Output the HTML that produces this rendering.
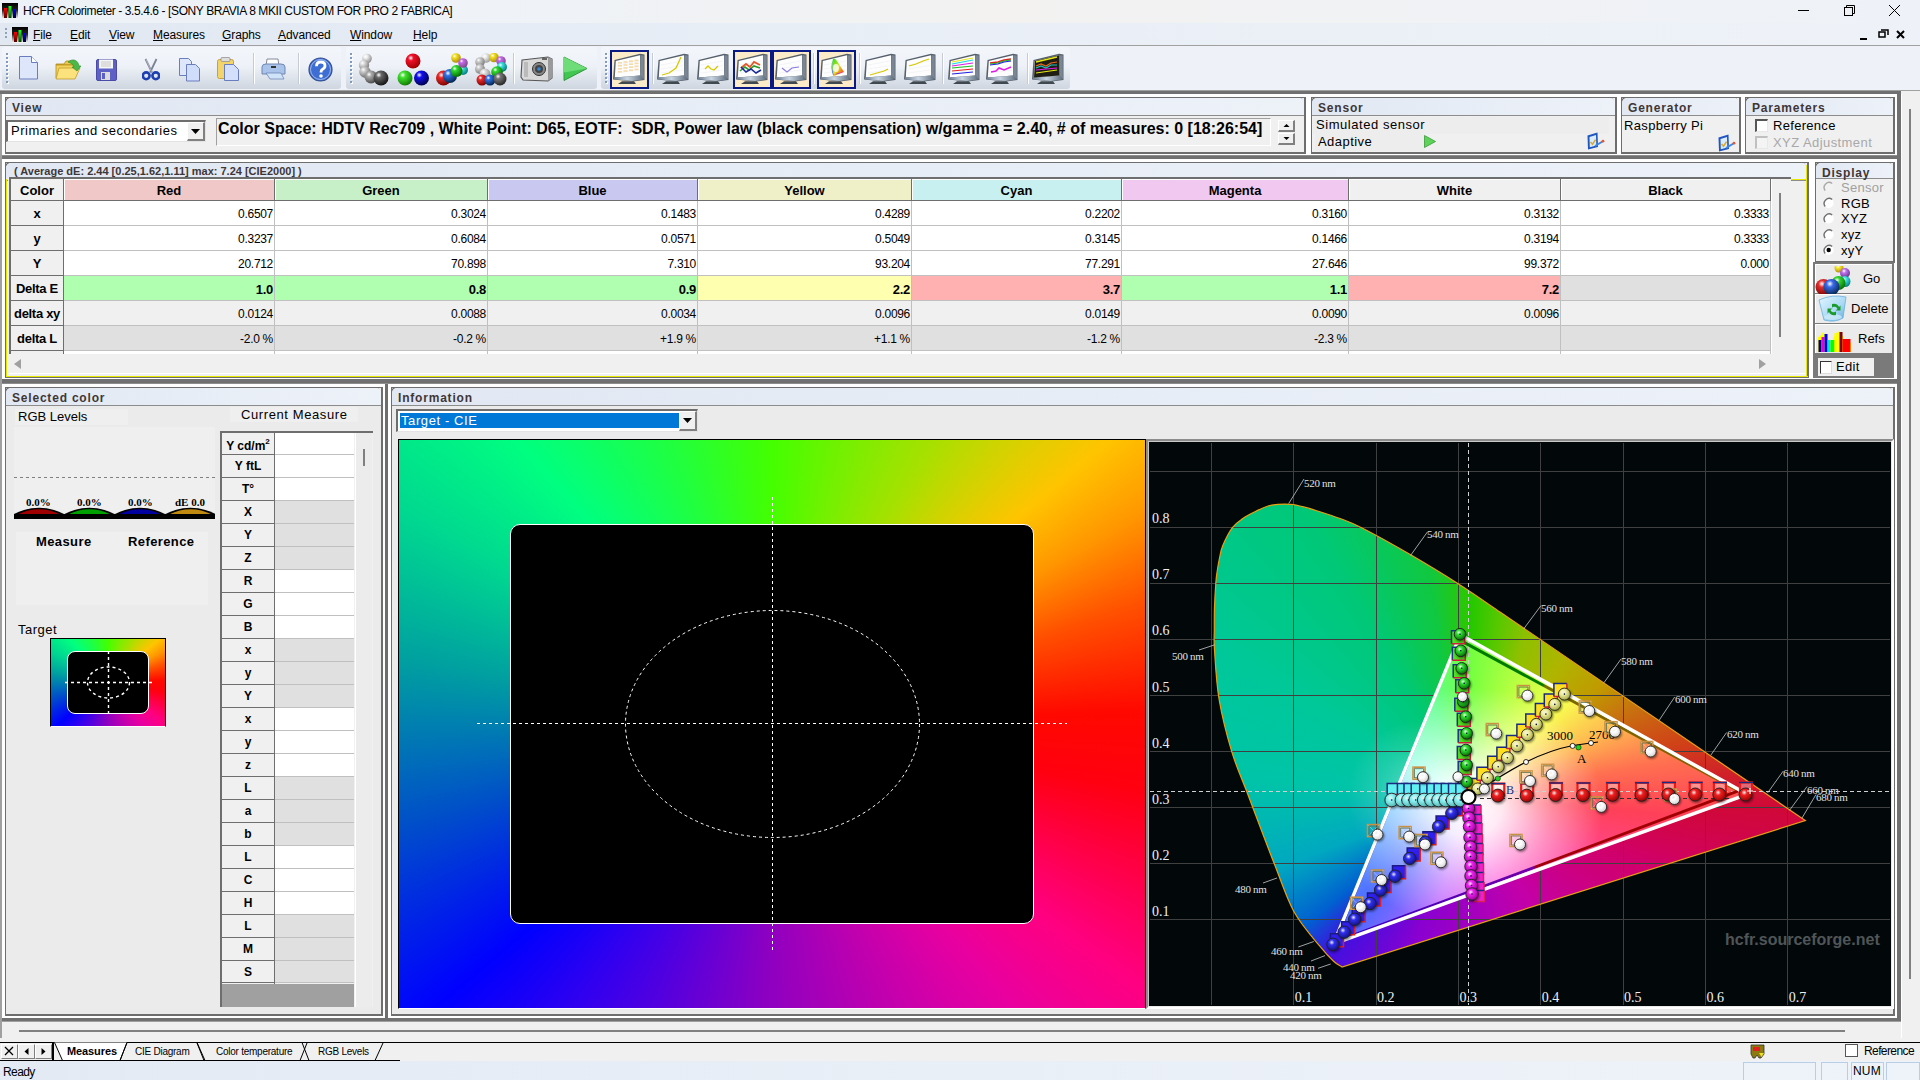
<!DOCTYPE html><html><head><meta charset="utf-8"><style>
*{margin:0;padding:0;box-sizing:border-box}
html,body{width:1920px;height:1080px;overflow:hidden}
body{position:relative;background:#f0f0f0;font-family:"Liberation Sans",sans-serif;font-size:12px;color:#000}
.a{position:absolute}
.t{position:absolute;white-space:nowrap;line-height:1}
.pane{position:absolute;background:#fff;}
.pin{position:absolute;left:3px;top:3px;right:2px;bottom:2px;border:1px solid #6e6e6e;background:#f0f0f0}
.hdr{position:absolute;left:0;top:0;right:0;height:18px;background:linear-gradient(90deg,#e1e8f3,#ecf1f9);border-bottom:1px solid #8c8c8c;border-radius:5px 5px 0 0;font-weight:bold;font-size:12px;color:#3d3a3a;padding:4px 0 0 6px;line-height:1}
</style></head><body><div class="a" style="left:0px;top:0px;width:1920px;height:23px;background:linear-gradient(90deg,#edf2f8 0%,#eff2f6 30%,#f3f2f1 52%,#f1f2f4 70%,#eef2f8 100%)"></div><svg class="a" style="left:2px;top:3px" width="16" height="16" viewBox="0 0 16 16"><defs><linearGradient id="ig" x1="0" y1="0" x2="0" y2="1"><stop offset="0" stop-color="#000"/><stop offset="0.45" stop-color="#222"/><stop offset="1" stop-color="#fff"/></linearGradient><linearGradient id="ir" x1="0" y1="0" x2="0" y2="1"><stop offset="0" stop-color="#f00"/><stop offset="1" stop-color="#500"/></linearGradient><linearGradient id="igr" x1="0" y1="0" x2="0" y2="1"><stop offset="0" stop-color="#2f2"/><stop offset="1" stop-color="#040"/></linearGradient><linearGradient id="ib" x1="0" y1="0" x2="0" y2="1"><stop offset="0" stop-color="#00f"/><stop offset="1" stop-color="#003"/></linearGradient></defs><rect x="0" y="0" width="16" height="16" fill="url(#ig)"/><rect x="2" y="5" width="3" height="10" fill="url(#ir)"/><rect x="6.5" y="3" width="3" height="12" fill="url(#igr)"/><rect x="11" y="6" width="3" height="9" fill="url(#ib)"/></svg><div class="t" style="left:23px;top:5px;font-size:12px;color:#000;letter-spacing:-0.4px">HCFR Colorimeter - 3.5.4.6 - [SONY BRAVIA 8 MKII CUSTOM FOR PRO 2 FABRICA]</div><svg class="a" style="left:1790px;top:0" width="130" height="23"><line x1="1798" y1="10.5" x2="1809" y2="10.5" stroke="#000" transform="translate(-1790,0)"/><g transform="translate(-1790,0)" fill="none" stroke="#000"><rect x="1844.5" y="7.5" width="8" height="8"/><path d="M1846.5 7.5V5.5h8v8h-2"/><path d="M1889 5l11 11M1900 5l-11 11"/></g></svg><div class="a" style="left:0px;top:23px;width:1920px;height:22px;background:linear-gradient(90deg,#e1e8f2,#e8eef6 40%,#eef2f8)"></div><div class="a" style="left:0px;top:45px;width:1920px;height:1px;background:#a0a0a0"></div><div class="a" style="left:0px;top:46px;width:1920px;height:44px;background:#eef2f8"></div><div class="a" style="left:5px;top:28px;width:2px;height:2px;background:#8da3bd"></div><div class="a" style="left:5px;top:32px;width:2px;height:2px;background:#8da3bd"></div><div class="a" style="left:5px;top:36px;width:2px;height:2px;background:#8da3bd"></div><svg class="a" style="left:12px;top:27px" width="16" height="16" viewBox="0 0 16 16"><defs><linearGradient id="ig" x1="0" y1="0" x2="0" y2="1"><stop offset="0" stop-color="#000"/><stop offset="0.45" stop-color="#222"/><stop offset="1" stop-color="#fff"/></linearGradient><linearGradient id="ir" x1="0" y1="0" x2="0" y2="1"><stop offset="0" stop-color="#f00"/><stop offset="1" stop-color="#500"/></linearGradient><linearGradient id="igr" x1="0" y1="0" x2="0" y2="1"><stop offset="0" stop-color="#2f2"/><stop offset="1" stop-color="#040"/></linearGradient><linearGradient id="ib" x1="0" y1="0" x2="0" y2="1"><stop offset="0" stop-color="#00f"/><stop offset="1" stop-color="#003"/></linearGradient></defs><rect x="0" y="0" width="16" height="16" fill="url(#ig)"/><rect x="2" y="5" width="3" height="10" fill="url(#ir)"/><rect x="6.5" y="3" width="3" height="12" fill="url(#igr)"/><rect x="11" y="6" width="3" height="9" fill="url(#ib)"/></svg><div class="t" style="left:33px;top:29px;font-size:12px;letter-spacing:-0.1px"><u>F</u>ile</div><div class="t" style="left:70px;top:29px;font-size:12px;letter-spacing:-0.1px"><u>E</u>dit</div><div class="t" style="left:109px;top:29px;font-size:12px;letter-spacing:-0.1px"><u>V</u>iew</div><div class="t" style="left:153px;top:29px;font-size:12px;letter-spacing:-0.1px"><u>M</u>easures</div><div class="t" style="left:222px;top:29px;font-size:12px;letter-spacing:-0.1px"><u>G</u>raphs</div><div class="t" style="left:278px;top:29px;font-size:12px;letter-spacing:-0.1px"><u>A</u>dvanced</div><div class="t" style="left:350px;top:29px;font-size:12px;letter-spacing:-0.1px"><u>W</u>indow</div><div class="t" style="left:413px;top:29px;font-size:12px;letter-spacing:-0.1px"><u>H</u>elp</div><svg class="a" style="left:1850px;top:25px" width="70" height="20"><g fill="none" stroke="#000" stroke-width="2"><path d="M10 14h7"/><rect x="29" y="7" width="6" height="5" stroke-width="1.5"/><path d="M31 5h7v5" stroke-width="1.5"/><path d="M47 6l7 7M54 6l-7 7"/></g></svg><div class="a" style="left:2px;top:47px;width:339px;height:42px;background:linear-gradient(#f3f6fb,#eef2f8 45%,#cfd6e0);border-radius:3px"></div><div class="a" style="left:346px;top:47px;width:251px;height:42px;background:linear-gradient(#f3f6fb,#eef2f8 45%,#cfd6e0);border-radius:3px"></div><div class="a" style="left:601px;top:47px;width:469px;height:42px;background:linear-gradient(#f3f6fb,#eef2f8 45%,#cfd6e0);border-radius:3px"></div><div class="a" style="left:6px;top:53px;width:2px;height:2px;background:#7f9bbd;box-shadow:1px 1px 0 #fff"></div><div class="a" style="left:6px;top:57px;width:2px;height:2px;background:#7f9bbd;box-shadow:1px 1px 0 #fff"></div><div class="a" style="left:6px;top:61px;width:2px;height:2px;background:#7f9bbd;box-shadow:1px 1px 0 #fff"></div><div class="a" style="left:6px;top:65px;width:2px;height:2px;background:#7f9bbd;box-shadow:1px 1px 0 #fff"></div><div class="a" style="left:6px;top:69px;width:2px;height:2px;background:#7f9bbd;box-shadow:1px 1px 0 #fff"></div><div class="a" style="left:6px;top:73px;width:2px;height:2px;background:#7f9bbd;box-shadow:1px 1px 0 #fff"></div><div class="a" style="left:6px;top:77px;width:2px;height:2px;background:#7f9bbd;box-shadow:1px 1px 0 #fff"></div><div class="a" style="left:6px;top:81px;width:2px;height:2px;background:#7f9bbd;box-shadow:1px 1px 0 #fff"></div><div class="a" style="left:350px;top:53px;width:2px;height:2px;background:#7f9bbd;box-shadow:1px 1px 0 #fff"></div><div class="a" style="left:350px;top:57px;width:2px;height:2px;background:#7f9bbd;box-shadow:1px 1px 0 #fff"></div><div class="a" style="left:350px;top:61px;width:2px;height:2px;background:#7f9bbd;box-shadow:1px 1px 0 #fff"></div><div class="a" style="left:350px;top:65px;width:2px;height:2px;background:#7f9bbd;box-shadow:1px 1px 0 #fff"></div><div class="a" style="left:350px;top:69px;width:2px;height:2px;background:#7f9bbd;box-shadow:1px 1px 0 #fff"></div><div class="a" style="left:350px;top:73px;width:2px;height:2px;background:#7f9bbd;box-shadow:1px 1px 0 #fff"></div><div class="a" style="left:350px;top:77px;width:2px;height:2px;background:#7f9bbd;box-shadow:1px 1px 0 #fff"></div><div class="a" style="left:350px;top:81px;width:2px;height:2px;background:#7f9bbd;box-shadow:1px 1px 0 #fff"></div><div class="a" style="left:605px;top:53px;width:2px;height:2px;background:#7f9bbd;box-shadow:1px 1px 0 #fff"></div><div class="a" style="left:605px;top:57px;width:2px;height:2px;background:#7f9bbd;box-shadow:1px 1px 0 #fff"></div><div class="a" style="left:605px;top:61px;width:2px;height:2px;background:#7f9bbd;box-shadow:1px 1px 0 #fff"></div><div class="a" style="left:605px;top:65px;width:2px;height:2px;background:#7f9bbd;box-shadow:1px 1px 0 #fff"></div><div class="a" style="left:605px;top:69px;width:2px;height:2px;background:#7f9bbd;box-shadow:1px 1px 0 #fff"></div><div class="a" style="left:605px;top:73px;width:2px;height:2px;background:#7f9bbd;box-shadow:1px 1px 0 #fff"></div><div class="a" style="left:605px;top:77px;width:2px;height:2px;background:#7f9bbd;box-shadow:1px 1px 0 #fff"></div><div class="a" style="left:605px;top:81px;width:2px;height:2px;background:#7f9bbd;box-shadow:1px 1px 0 #fff"></div><svg class="a" style="left:19px;top:56px" width="20" height="24" viewBox="0 0 20 24"><path d="M0.5 0.5h12l6 6v16.5h-18z" fill="#dde6fb" stroke="#6a7dbf"/><path d="M12.5 0.5v6h6" fill="#fff" stroke="#6a7dbf"/></svg><svg class="a" style="left:55px;top:58px" width="26" height="22" viewBox="0 0 26 22"><path d="M1 6h8l2-3h8v4h-18z" fill="#e9c74a" stroke="#b38a1a" stroke-width="0.8"/><path d="M1 7h18v13h-18z" fill="#f3d35c" stroke="#b38a1a" stroke-width="0.8"/><path d="M4 10h21l-5 11h-19z" fill="#fbe27c" stroke="#c39a2a" stroke-width="0.8"/><path d="M13 4c5-4 10-2 11 4l2 0-4 5-5-4 2 0c-1-3-3-4-6-5z" fill="#4cb84a" stroke="#2a8a28" stroke-width="0.6"/></svg><svg class="a" style="left:96px;top:59px" width="21" height="22" viewBox="0 0 21 22"><rect x="0.5" y="0.5" width="20" height="21" rx="1.5" fill="#5f60c6" stroke="#4a4aa8"/><rect x="3" y="0.5" width="14" height="9" fill="#f6f6f6"/><path d="M5 3h10M5 5h10M5 7h10" stroke="#aaa" stroke-width="0.6"/><rect x="5" y="13" width="9" height="8" fill="#dcdcdc"/><rect x="6" y="14" width="3" height="6" fill="#5f60c6"/></svg><svg class="a" style="left:142px;top:58px" width="18" height="23" viewBox="0 0 18 23"><path d="M3.5 1l6.5 13.5M14.5 1l-6.5 13.5" stroke="#7a8296" stroke-width="1.8"/><path d="M4 1.5l5.5 12" stroke="#d0d4dc" stroke-width="0.6"/><circle cx="4.2" cy="17.8" r="3.4" fill="none" stroke="#1d3fb0" stroke-width="2.6"/><circle cx="13.8" cy="17.8" r="3.4" fill="none" stroke="#1d3fb0" stroke-width="2.6"/></svg><svg class="a" style="left:179px;top:58px" width="22" height="24" viewBox="0 0 22 24"><path d="M0.5 0.5h9l3 3v14h-12z" fill="#dde6fb" stroke="#6a7dbf"/><path d="M7.5 6.5h9l4 4v12.5h-13z" fill="#cfdcfa" stroke="#6a7dbf"/></svg><svg class="a" style="left:217px;top:57px" width="23" height="25" viewBox="0 0 23 25"><rect x="0.5" y="2.5" width="16" height="19" rx="2" fill="#f2d46a" stroke="#c6a23a"/><rect x="4" y="0.5" width="9" height="4" rx="1" fill="#ddd" stroke="#888" stroke-width="0.7"/><path d="M7.5 7.5h9l5 5v11h-14z" fill="#d4e0fb" stroke="#6a7dbf"/></svg><div class="a" style="left:253px;top:53px;width:1px;height:31px;background:#c5cbd5;box-shadow:1px 0 0 #fff"></div><svg class="a" style="left:261px;top:58px" width="25" height="23" viewBox="0 0 25 23"><path d="M6 1h11l1 7h-13z" fill="#fff" stroke="#889"/><path d="M1 9q0-3 4-3h15q4 0 4 3v7h-23z" fill="#a9c3ea" stroke="#6f87b4"/><rect x="10" y="8" width="5" height="2" fill="#333"/><path d="M5 15h15l3 6h-14z" fill="#cfe4f8" stroke="#6f87b4" stroke-width="0.8"/></svg><div class="a" style="left:298px;top:53px;width:1px;height:31px;background:#c5cbd5;box-shadow:1px 0 0 #fff"></div><svg class="a" style="left:308px;top:57px" width="25" height="25" viewBox="0 0 25 25"><circle cx="12.5" cy="12.5" r="11.5" fill="#3e6dd3" stroke="#34508f" stroke-width="1.2"/><circle cx="12.5" cy="12.5" r="10" fill="none" stroke="#b8cdf4" stroke-width="0.8"/><path d="M8.5 9.2q0-4.2 4.2-4.2 4.3 0 4.3 3.8 0 2.3-2.4 3.5-1.5.8-1.5 2.5v.8" fill="none" stroke="#fff" stroke-width="2.8"/><circle cx="13" cy="19" r="1.8" fill="#fff"/></svg><svg class="a" style="left:357px;top:53px" width="33" height="33" viewBox="0 0 33 33"><radialGradient id="g1" cx="0.35" cy="0.3" r="0.75"><stop offset="0" stop-color="#fff"/><stop offset="0.25" stop-color="#eee"/><stop offset="1" stop-color="#888"/></radialGradient><circle cx="10" cy="5.5" r="4.8" fill="url(#g1)"/><radialGradient id="g2" cx="0.35" cy="0.3" r="0.75"><stop offset="0" stop-color="#fff"/><stop offset="0.25" stop-color="#ddd"/><stop offset="1" stop-color="#777"/></radialGradient><circle cx="7" cy="12" r="5.2" fill="url(#g2)"/><radialGradient id="g3" cx="0.35" cy="0.3" r="0.75"><stop offset="0" stop-color="#fff"/><stop offset="0.25" stop-color="#ccc"/><stop offset="1" stop-color="#666"/></radialGradient><circle cx="8" cy="19" r="5.8" fill="url(#g3)"/><radialGradient id="g4" cx="0.35" cy="0.3" r="0.75"><stop offset="0" stop-color="#fff"/><stop offset="0.25" stop-color="#aaa"/><stop offset="1" stop-color="#444"/></radialGradient><circle cx="14" cy="24" r="6.5" fill="url(#g4)"/><radialGradient id="g5" cx="0.35" cy="0.3" r="0.75"><stop offset="0" stop-color="#fff"/><stop offset="0.25" stop-color="#666"/><stop offset="1" stop-color="#111"/></radialGradient><circle cx="24" cy="25" r="7.5" fill="url(#g5)"/></svg><svg class="a" style="left:397px;top:53px" width="33" height="33" viewBox="0 0 33 33"><radialGradient id="g6" cx="0.35" cy="0.3" r="0.75"><stop offset="0" stop-color="#fff"/><stop offset="0.25" stop-color="#f0102a"/><stop offset="1" stop-color="#900"/></radialGradient><circle cx="16" cy="8" r="7.5" fill="url(#g6)"/><radialGradient id="g7" cx="0.35" cy="0.3" r="0.75"><stop offset="0" stop-color="#fff"/><stop offset="0.25" stop-color="#40e030"/><stop offset="1" stop-color="#170"/></radialGradient><circle cx="8" cy="25" r="7.5" fill="url(#g7)"/><radialGradient id="g8" cx="0.35" cy="0.3" r="0.75"><stop offset="0" stop-color="#fff"/><stop offset="0.25" stop-color="#1010f0"/><stop offset="1" stop-color="#004"/></radialGradient><circle cx="24.5" cy="25" r="7.5" fill="url(#g8)"/></svg><svg class="a" style="left:436px;top:53px" width="33" height="33" viewBox="0 0 33 33"><radialGradient id="g9" cx="0.35" cy="0.3" r="0.75"><stop offset="0" stop-color="#fff"/><stop offset="0.25" stop-color="#e82a2a"/><stop offset="1" stop-color="#700"/></radialGradient><circle cx="7.5" cy="25" r="7.5" fill="url(#g9)"/><radialGradient id="g10" cx="0.35" cy="0.3" r="0.75"><stop offset="0" stop-color="#fff"/><stop offset="0.25" stop-color="#3070e8"/><stop offset="1" stop-color="#024"/></radialGradient><circle cx="14" cy="23" r="7" fill="url(#g10)"/><radialGradient id="g11" cx="0.35" cy="0.3" r="0.75"><stop offset="0" stop-color="#fff"/><stop offset="0.25" stop-color="#40e0e0"/><stop offset="1" stop-color="#077"/></radialGradient><circle cx="27" cy="17" r="5" fill="url(#g11)"/><radialGradient id="g12" cx="0.35" cy="0.3" r="0.75"><stop offset="0" stop-color="#fff"/><stop offset="0.25" stop-color="#30d830"/><stop offset="1" stop-color="#060"/></radialGradient><circle cx="20.5" cy="18" r="6" fill="url(#g12)"/><radialGradient id="g13" cx="0.35" cy="0.3" r="0.75"><stop offset="0" stop-color="#fff"/><stop offset="0.25" stop-color="#f3e12a"/><stop offset="1" stop-color="#a80"/></radialGradient><circle cx="20" cy="5" r="4.8" fill="url(#g13)"/><radialGradient id="g14" cx="0.35" cy="0.3" r="0.75"><stop offset="0" stop-color="#fff"/><stop offset="0.25" stop-color="#c46ae6"/><stop offset="1" stop-color="#748"/></radialGradient><circle cx="27" cy="10" r="4.8" fill="url(#g14)"/></svg><svg class="a" style="left:475px;top:53px" width="33" height="33" viewBox="0 0 33 33"><radialGradient id="g15" cx="0.35" cy="0.3" r="0.75"><stop offset="0" stop-color="#fff"/><stop offset="0.25" stop-color="#eee"/><stop offset="1" stop-color="#999"/></radialGradient><circle cx="11" cy="5" r="4.8" fill="url(#g15)"/><radialGradient id="g16" cx="0.35" cy="0.3" r="0.75"><stop offset="0" stop-color="#fff"/><stop offset="0.25" stop-color="#f3e12a"/><stop offset="1" stop-color="#a80"/></radialGradient><circle cx="19" cy="4.5" r="4.8" fill="url(#g16)"/><radialGradient id="g17" cx="0.35" cy="0.3" r="0.75"><stop offset="0" stop-color="#fff"/><stop offset="0.25" stop-color="#c46ae6"/><stop offset="1" stop-color="#748"/></radialGradient><circle cx="26" cy="8" r="4.8" fill="url(#g17)"/><radialGradient id="g18" cx="0.35" cy="0.3" r="0.75"><stop offset="0" stop-color="#fff"/><stop offset="0.25" stop-color="#40e0e0"/><stop offset="1" stop-color="#077"/></radialGradient><circle cx="27" cy="14" r="5" fill="url(#g18)"/><radialGradient id="g19" cx="0.35" cy="0.3" r="0.75"><stop offset="0" stop-color="#fff"/><stop offset="0.25" stop-color="#ccc"/><stop offset="1" stop-color="#777"/></radialGradient><circle cx="5" cy="9" r="4.8" fill="url(#g19)"/><radialGradient id="g20" cx="0.35" cy="0.3" r="0.75"><stop offset="0" stop-color="#fff"/><stop offset="0.25" stop-color="#ccc"/><stop offset="1" stop-color="#777"/></radialGradient><circle cx="5" cy="16" r="5" fill="url(#g20)"/><radialGradient id="g21" cx="0.35" cy="0.3" r="0.75"><stop offset="0" stop-color="#fff"/><stop offset="0.25" stop-color="#ddd"/><stop offset="1" stop-color="#888"/></radialGradient><circle cx="10" cy="21" r="5.5" fill="url(#g21)"/><radialGradient id="g22" cx="0.35" cy="0.3" r="0.75"><stop offset="0" stop-color="#fff"/><stop offset="0.25" stop-color="#30d830"/><stop offset="1" stop-color="#060"/></radialGradient><circle cx="22" cy="19" r="5.8" fill="url(#g22)"/><radialGradient id="g23" cx="0.35" cy="0.3" r="0.75"><stop offset="0" stop-color="#fff"/><stop offset="0.25" stop-color="#e82a2a"/><stop offset="1" stop-color="#700"/></radialGradient><circle cx="7" cy="27" r="5.5" fill="url(#g23)"/><radialGradient id="g24" cx="0.35" cy="0.3" r="0.75"><stop offset="0" stop-color="#fff"/><stop offset="0.25" stop-color="#3070e8"/><stop offset="1" stop-color="#024"/></radialGradient><circle cx="15" cy="27" r="5.5" fill="url(#g24)"/><radialGradient id="g25" cx="0.35" cy="0.3" r="0.75"><stop offset="0" stop-color="#fff"/><stop offset="0.25" stop-color="#777"/><stop offset="1" stop-color="#222"/></radialGradient><circle cx="25" cy="26" r="6.5" fill="url(#g25)"/></svg><div class="a" style="left:513px;top:53px;width:1px;height:31px;background:#c5cbd5;box-shadow:1px 0 0 #fff"></div><svg class="a" style="left:520px;top:54px" width="33" height="30" viewBox="0 0 33 30"><path d="M2 6l26-3 4 2v19l-4 3-25-1-2-3z" fill="#d9d9d9" stroke="#555" stroke-width="1.1"/><path d="M28 3l4 2v19l-4 3z" fill="#9a9a9a"/><rect x="4" y="8" width="4" height="15" fill="#bbb"/><circle cx="19" cy="15" r="6.5" fill="#888" stroke="#333"/><circle cx="19" cy="15" r="4" fill="#444"/><circle cx="19" cy="15" r="1.8" fill="#2a8ae0"/><rect x="22" y="4" width="5" height="2" fill="#666"/></svg><svg class="a" style="left:562px;top:55px" width="27" height="27" viewBox="0 0 27 27"><path d="M2 2l23 11.5-23 12z" fill="#41c650" stroke="#2c9a3a" stroke-width="1"/><path d="M2 2l23 11.5-23 4z" fill="#6edc78"/></svg><div class="a" style="left:610px;top:50px;width:39px;height:39px;background:#fcebc9;border:2px solid #0a1a84"></div><svg class="a" style="left:613px;top:53px" width="32" height="32" viewBox="0 0 32 32"><defs><linearGradient id="g26" x1="0" y1="0" x2="1" y2="0"><stop offset="0" stop-color="#6f8094"/><stop offset="0.45" stop-color="#c9d5e2"/><stop offset="1" stop-color="#5d6b7b"/></linearGradient></defs><path d="M1.5 7 L27 0.8 L31.5 1.6 L31.5 27 L20 28.5 L0 26.5 Z" fill="#56606c"/><path d="M2.8 8 L27 2.2 L27.2 22.5 L1.8 24.5 Z" fill="#fdfdfd"/><path d="M4 12L26 8M4 16L26 12.5M4 20L26 17" stroke="#eceff3" stroke-width="0.6"/><path d="M1 24.6 L27.2 22.5 L30.8 26.6 L19 28 L1 26.2Z" fill="url(#g26)"/><path d="M27.3 2.2 L30.8 2.6 L30.8 26.2 L27.3 22.4 Z" fill="#7a8694"/><path d="M5 31 L23 31 L21 28.2 L9 28.2 Z" fill="#404850"/><g fill="#f7d9a8"><rect x="5.0" y="9.0" width="4" height="1.6"/><rect x="5.0" y="12.0" width="4" height="1.6"/><rect x="5.0" y="15.0" width="4" height="1.6"/><rect x="5.0" y="18.0" width="4" height="1.6"/><rect x="10.5" y="8.2" width="4" height="1.6"/><rect x="10.5" y="11.2" width="4" height="1.6"/><rect x="10.5" y="14.2" width="4" height="1.6"/><rect x="10.5" y="17.2" width="4" height="1.6"/><rect x="16.0" y="7.4" width="4" height="1.6"/><rect x="16.0" y="10.4" width="4" height="1.6"/><rect x="16.0" y="13.4" width="4" height="1.6"/><rect x="16.0" y="16.4" width="4" height="1.6"/><rect x="21.5" y="6.6" width="4" height="1.6"/><rect x="21.5" y="9.6" width="4" height="1.6"/><rect x="21.5" y="12.6" width="4" height="1.6"/><rect x="21.5" y="15.6" width="4" height="1.6"/></g></svg><svg class="a" style="left:657px;top:53px" width="32" height="32" viewBox="0 0 32 32"><defs><linearGradient id="g27" x1="0" y1="0" x2="1" y2="0"><stop offset="0" stop-color="#6f8094"/><stop offset="0.45" stop-color="#c9d5e2"/><stop offset="1" stop-color="#5d6b7b"/></linearGradient></defs><path d="M1.5 7 L27 0.8 L31.5 1.6 L31.5 27 L20 28.5 L0 26.5 Z" fill="#56606c"/><path d="M2.8 8 L27 2.2 L27.2 22.5 L1.8 24.5 Z" fill="#fdfdfd"/><path d="M4 12L26 8M4 16L26 12.5M4 20L26 17" stroke="#eceff3" stroke-width="0.6"/><path d="M1 24.6 L27.2 22.5 L30.8 26.6 L19 28 L1 26.2Z" fill="url(#g27)"/><path d="M27.3 2.2 L30.8 2.6 L30.8 26.2 L27.3 22.4 Z" fill="#7a8694"/><path d="M5 31 L23 31 L21 28.2 L9 28.2 Z" fill="#404850"/><polyline points="5,22 12,20 19,15 24,4" fill="none" stroke="#d8c800" stroke-width="1.3"/></svg><svg class="a" style="left:697px;top:53px" width="32" height="32" viewBox="0 0 32 32"><defs><linearGradient id="g28" x1="0" y1="0" x2="1" y2="0"><stop offset="0" stop-color="#6f8094"/><stop offset="0.45" stop-color="#c9d5e2"/><stop offset="1" stop-color="#5d6b7b"/></linearGradient></defs><path d="M1.5 7 L27 0.8 L31.5 1.6 L31.5 27 L20 28.5 L0 26.5 Z" fill="#56606c"/><path d="M2.8 8 L27 2.2 L27.2 22.5 L1.8 24.5 Z" fill="#fdfdfd"/><path d="M4 12L26 8M4 16L26 12.5M4 20L26 17" stroke="#eceff3" stroke-width="0.6"/><path d="M1 24.6 L27.2 22.5 L30.8 26.6 L19 28 L1 26.2Z" fill="url(#g28)"/><path d="M27.3 2.2 L30.8 2.6 L30.8 26.2 L27.3 22.4 Z" fill="#7a8694"/><path d="M5 31 L23 31 L21 28.2 L9 28.2 Z" fill="#404850"/><polyline points="8,16 11,13 14,16 17,17 21,13" fill="none" stroke="#d8c800" stroke-width="1.3"/></svg><div class="a" style="left:733px;top:50px;width:39px;height:39px;background:#fcebc9;border:2px solid #0a1a84"></div><svg class="a" style="left:736px;top:53px" width="32" height="32" viewBox="0 0 32 32"><defs><linearGradient id="g29" x1="0" y1="0" x2="1" y2="0"><stop offset="0" stop-color="#6f8094"/><stop offset="0.45" stop-color="#c9d5e2"/><stop offset="1" stop-color="#5d6b7b"/></linearGradient></defs><path d="M1.5 7 L27 0.8 L31.5 1.6 L31.5 27 L20 28.5 L0 26.5 Z" fill="#56606c"/><path d="M2.8 8 L27 2.2 L27.2 22.5 L1.8 24.5 Z" fill="#fdfdfd"/><path d="M4 12L26 8M4 16L26 12.5M4 20L26 17" stroke="#eceff3" stroke-width="0.6"/><path d="M1 24.6 L27.2 22.5 L30.8 26.6 L19 28 L1 26.2Z" fill="url(#g29)"/><path d="M27.3 2.2 L30.8 2.6 L30.8 26.2 L27.3 22.4 Z" fill="#7a8694"/><path d="M5 31 L23 31 L21 28.2 L9 28.2 Z" fill="#404850"/><polyline points="5,15 10,11 14,14 18,9 24,12" fill="none" stroke="#e05a2a" stroke-width="1.8"/><polyline points="4,18 9,14 13,17 18,13 24,15" fill="none" stroke="#2a9a2a" stroke-width="1.6"/><polyline points="5,14 10,19 15,16 20,20 25,17" fill="none" stroke="#1a2a9a" stroke-width="1.6"/></svg><div class="a" style="left:772px;top:50px;width:39px;height:39px;background:#fcebc9;border:2px solid #0a1a84"></div><svg class="a" style="left:775px;top:53px" width="32" height="32" viewBox="0 0 32 32"><defs><linearGradient id="g30" x1="0" y1="0" x2="1" y2="0"><stop offset="0" stop-color="#6f8094"/><stop offset="0.45" stop-color="#c9d5e2"/><stop offset="1" stop-color="#5d6b7b"/></linearGradient></defs><path d="M1.5 7 L27 0.8 L31.5 1.6 L31.5 27 L20 28.5 L0 26.5 Z" fill="#56606c"/><path d="M2.8 8 L27 2.2 L27.2 22.5 L1.8 24.5 Z" fill="#fdfdfd"/><path d="M4 12L26 8M4 16L26 12.5M4 20L26 17" stroke="#eceff3" stroke-width="0.6"/><path d="M1 24.6 L27.2 22.5 L30.8 26.6 L19 28 L1 26.2Z" fill="url(#g30)"/><path d="M27.3 2.2 L30.8 2.6 L30.8 26.2 L27.3 22.4 Z" fill="#7a8694"/><path d="M5 31 L23 31 L21 28.2 L9 28.2 Z" fill="#404850"/><polyline points="7,15 12,19 17,15 24,14" fill="none" stroke="#8a7ae0" stroke-width="1.1"/></svg><div class="a" style="left:817px;top:50px;width:39px;height:39px;background:#fcebc9;border:2px solid #0a1a84"></div><svg class="a" style="left:820px;top:53px" width="32" height="32" viewBox="0 0 32 32"><defs><linearGradient id="g31" x1="0" y1="0" x2="1" y2="0"><stop offset="0" stop-color="#6f8094"/><stop offset="0.45" stop-color="#c9d5e2"/><stop offset="1" stop-color="#5d6b7b"/></linearGradient></defs><path d="M1.5 7 L27 0.8 L31.5 1.6 L31.5 27 L20 28.5 L0 26.5 Z" fill="#56606c"/><path d="M2.8 8 L27 2.2 L27.2 22.5 L1.8 24.5 Z" fill="#fdfdfd"/><path d="M4 12L26 8M4 16L26 12.5M4 20L26 17" stroke="#eceff3" stroke-width="0.6"/><path d="M1 24.6 L27.2 22.5 L30.8 26.6 L19 28 L1 26.2Z" fill="url(#g31)"/><path d="M27.3 2.2 L30.8 2.6 L30.8 26.2 L27.3 22.4 Z" fill="#7a8694"/><path d="M5 31 L23 31 L21 28.2 L9 28.2 Z" fill="#404850"/><defs><linearGradient id="cie3" x1="0" y1="0" x2="1" y2="1"><stop offset="0" stop-color="#20e020"/><stop offset="0.5" stop-color="#e0e020"/><stop offset="1" stop-color="#ff2020"/></linearGradient><linearGradient id="cie4" x1="0" y1="0" x2="0" y2="1"><stop offset="0" stop-color="#30d030"/><stop offset="1" stop-color="#3040ff"/></linearGradient></defs><path d="M13 6q2-1 4 2l7 11-10 4q-3-8-1-17z" fill="url(#cie3)"/><path d="M13 6q-2 9 1 17l-1-1q-3-8 0-16z" fill="url(#cie4)"/><path d="M14 22l10-3-6 1z" fill="#c020e0"/><ellipse cx="16" cy="15" rx="3" ry="4" fill="#fff" opacity="0.8"/></svg><svg class="a" style="left:864px;top:53px" width="32" height="32" viewBox="0 0 32 32"><defs><linearGradient id="g32" x1="0" y1="0" x2="1" y2="0"><stop offset="0" stop-color="#6f8094"/><stop offset="0.45" stop-color="#c9d5e2"/><stop offset="1" stop-color="#5d6b7b"/></linearGradient></defs><path d="M1.5 7 L27 0.8 L31.5 1.6 L31.5 27 L20 28.5 L0 26.5 Z" fill="#56606c"/><path d="M2.8 8 L27 2.2 L27.2 22.5 L1.8 24.5 Z" fill="#fdfdfd"/><path d="M4 12L26 8M4 16L26 12.5M4 20L26 17" stroke="#eceff3" stroke-width="0.6"/><path d="M1 24.6 L27.2 22.5 L30.8 26.6 L19 28 L1 26.2Z" fill="url(#g32)"/><path d="M27.3 2.2 L30.8 2.6 L30.8 26.2 L27.3 22.4 Z" fill="#7a8694"/><path d="M5 31 L23 31 L21 28.2 L9 28.2 Z" fill="#404850"/><polyline points="6,22 13,20 20,18 24,16" fill="none" stroke="#d8c800" stroke-width="1.3"/></svg><svg class="a" style="left:904px;top:53px" width="32" height="32" viewBox="0 0 32 32"><defs><linearGradient id="g33" x1="0" y1="0" x2="1" y2="0"><stop offset="0" stop-color="#6f8094"/><stop offset="0.45" stop-color="#c9d5e2"/><stop offset="1" stop-color="#5d6b7b"/></linearGradient></defs><path d="M1.5 7 L27 0.8 L31.5 1.6 L31.5 27 L20 28.5 L0 26.5 Z" fill="#56606c"/><path d="M2.8 8 L27 2.2 L27.2 22.5 L1.8 24.5 Z" fill="#fdfdfd"/><path d="M4 12L26 8M4 16L26 12.5M4 20L26 17" stroke="#eceff3" stroke-width="0.6"/><path d="M1 24.6 L27.2 22.5 L30.8 26.6 L19 28 L1 26.2Z" fill="url(#g33)"/><path d="M27.3 2.2 L30.8 2.6 L30.8 26.2 L27.3 22.4 Z" fill="#7a8694"/><path d="M5 31 L23 31 L21 28.2 L9 28.2 Z" fill="#404850"/><polyline points="5,13 12,11 19,8 25,6" fill="none" stroke="#d8c800" stroke-width="1.3"/></svg><svg class="a" style="left:948px;top:53px" width="32" height="32" viewBox="0 0 32 32"><defs><linearGradient id="g34" x1="0" y1="0" x2="1" y2="0"><stop offset="0" stop-color="#6f8094"/><stop offset="0.45" stop-color="#c9d5e2"/><stop offset="1" stop-color="#5d6b7b"/></linearGradient></defs><path d="M1.5 7 L27 0.8 L31.5 1.6 L31.5 27 L20 28.5 L0 26.5 Z" fill="#56606c"/><path d="M2.8 8 L27 2.2 L27.2 22.5 L1.8 24.5 Z" fill="#fdfdfd"/><path d="M4 12L26 8M4 16L26 12.5M4 20L26 17" stroke="#eceff3" stroke-width="0.6"/><path d="M1 24.6 L27.2 22.5 L30.8 26.6 L19 28 L1 26.2Z" fill="url(#g34)"/><path d="M27.3 2.2 L30.8 2.6 L30.8 26.2 L27.3 22.4 Z" fill="#7a8694"/><path d="M5 31 L23 31 L21 28.2 L9 28.2 Z" fill="#404850"/><polyline points="4,9 25,5" fill="none" stroke="#e8e81a" stroke-width="1.2"/><polyline points="4,11 25,7" fill="none" stroke="#1ad8e8" stroke-width="1.2"/><polyline points="4,13 25,10" fill="none" stroke="#e01ae8" stroke-width="1.2"/><polyline points="4,15 25,13" fill="none" stroke="#20c020" stroke-width="1.2"/><polyline points="4,18 25,16" fill="none" stroke="#e02020" stroke-width="1.2"/><polyline points="4,21 25,19" fill="none" stroke="#2020e0" stroke-width="1.2"/></svg><svg class="a" style="left:986px;top:53px" width="32" height="32" viewBox="0 0 32 32"><defs><linearGradient id="g35" x1="0" y1="0" x2="1" y2="0"><stop offset="0" stop-color="#6f8094"/><stop offset="0.45" stop-color="#c9d5e2"/><stop offset="1" stop-color="#5d6b7b"/></linearGradient></defs><path d="M1.5 7 L27 0.8 L31.5 1.6 L31.5 27 L20 28.5 L0 26.5 Z" fill="#56606c"/><path d="M2.8 8 L27 2.2 L27.2 22.5 L1.8 24.5 Z" fill="#fdfdfd"/><path d="M4 12L26 8M4 16L26 12.5M4 20L26 17" stroke="#eceff3" stroke-width="0.6"/><path d="M1 24.6 L27.2 22.5 L30.8 26.6 L19 28 L1 26.2Z" fill="url(#g35)"/><path d="M27.3 2.2 L30.8 2.6 L30.8 26.2 L27.3 22.4 Z" fill="#7a8694"/><path d="M5 31 L23 31 L21 28.2 L9 28.2 Z" fill="#404850"/><polyline points="4,10 12,9 18,7 25,6" fill="none" stroke="#e02020" stroke-width="1.5"/><polyline points="4,11 12,10 18,8 25,7" fill="none" stroke="#20c020" stroke-width="1.2"/><polyline points="4,12 12,11 18,9 25,8" fill="none" stroke="#2020e0" stroke-width="1.2"/><polyline points="5,19 10,18 13,15 18,17 25,14" fill="none" stroke="#e01ae8" stroke-width="1.5"/></svg><svg class="a" style="left:1032px;top:53px" width="32" height="32" viewBox="0 0 32 32"><defs><linearGradient id="g36" x1="0" y1="0" x2="1" y2="0"><stop offset="0" stop-color="#6f8094"/><stop offset="0.45" stop-color="#c9d5e2"/><stop offset="1" stop-color="#5d6b7b"/></linearGradient></defs><path d="M1.5 7 L27 0.8 L31.5 1.6 L31.5 27 L20 28.5 L0 26.5 Z" fill="#56606c"/><path d="M2.8 8 L27 2.2 L27.2 22.5 L1.8 24.5 Z" fill="#fdfdfd"/><path d="M4 12L26 8M4 16L26 12.5M4 20L26 17" stroke="#eceff3" stroke-width="0.6"/><path d="M1 24.6 L27.2 22.5 L30.8 26.6 L19 28 L1 26.2Z" fill="url(#g36)"/><path d="M27.3 2.2 L30.8 2.6 L30.8 26.2 L27.3 22.4 Z" fill="#7a8694"/><path d="M5 31 L23 31 L21 28.2 L9 28.2 Z" fill="#404850"/><path d="M3 8L27 2.2 27.2 22.5 2 24.5Z" fill="#1e1e14"/><polyline points="4,9 25,4" fill="none" stroke="#e8e81a" stroke-width="1.4"/><polyline points="4,13 9,11 14,13 19,10 25,9" fill="none" stroke="#e86a1a" stroke-width="1.2"/><polyline points="4,15 9,13 14,15 19,12 25,12" fill="none" stroke="#20c0c0" stroke-width="1.2"/><polyline points="4,17 25,15" fill="none" stroke="#e01ae8" stroke-width="1.2"/><polyline points="4,20 25,17" fill="none" stroke="#e8e81a" stroke-width="1.2"/></svg><div class="a" style="left:652px;top:53px;width:1px;height:31px;background:#c5cbd5;box-shadow:1px 0 0 #fff"></div><div class="a" style="left:813px;top:53px;width:1px;height:31px;background:#c5cbd5;box-shadow:1px 0 0 #fff"></div><div class="a" style="left:859px;top:53px;width:1px;height:31px;background:#c5cbd5;box-shadow:1px 0 0 #fff"></div><div class="a" style="left:942px;top:53px;width:1px;height:31px;background:#c5cbd5;box-shadow:1px 0 0 #fff"></div><div class="a" style="left:1027px;top:53px;width:1px;height:31px;background:#c5cbd5;box-shadow:1px 0 0 #fff"></div><div class="a" style="left:0px;top:90px;width:1920px;height:1px;background:#a0a0a0"></div><div class="a" style="left:0px;top:91px;width:1901px;height:3px;background:#707070"></div><div class="a" style="left:0px;top:94px;width:1897px;height:927px;background:#fff"></div><div class="a" style="left:0px;top:94px;width:2px;height:944px;background:#a0a0a0"></div><div class="a" style="left:1897px;top:91px;width:4px;height:931px;background:#707070"></div><div class="a" style="left:1901px;top:94px;width:19px;height:944px;background:#f0f0f0;border-left:1px solid #fff"></div><div class="a" style="left:1909px;top:109px;width:2px;height:870px;background:#808080"></div><div class="a" style="left:2px;top:155px;width:1895px;height:4px;background:#707070;border-top:1px solid #8c8c8c"></div><div class="a" style="left:2px;top:379px;width:1895px;height:5px;background:#707070;border-bottom:1px solid #8c8c8c"></div><div class="a" style="left:2px;top:1018px;width:1899px;height:4px;background:#707070;border-bottom:1px solid #a0a0a0"></div><div class="a" style="left:385px;top:384px;width:3px;height:634px;background:#6e6e6e"></div><div class="a" style="left:2px;top:1022px;width:1899px;height:20px;background:#f0f0f0"></div><div class="a" style="left:19px;top:1030px;width:1826px;height:2px;background:#808080"></div><div class="a" style="left:5px;top:97px;width:1301px;height:57px;border:1px solid #6e6e6e;border-right-width:2px;border-bottom-width:2px;background:#f0f0f0"></div><div class="a" style="left:6px;top:98px;width:1298px;height:18px;background:linear-gradient(90deg,#e1e8f3,#edf2f9);border-bottom:1px solid #8c8c8c;border-radius:5px 5px 0 0;box-shadow:-1px -1px 0 #6e6e6e;"></div><div class="t" style="left:12px;top:102px;font-size:12px;font-weight:bold;color:#3f3636;letter-spacing:0.8px">View</div><div class="a" style="left:6px;top:120px;width:200px;height:22px;background:#fff;border-top:2px solid #6e6e6e;border-left:2px solid #6e6e6e;border-right:1px solid #e3e3e3;border-bottom:1px solid #e3e3e3"></div><div class="t" style="left:11px;top:124px;font-size:13px;letter-spacing:0.5px">Primaries and secondaries</div><div class="a" style="left:187px;top:122px;width:18px;height:19px;background:#f0f0f0;border-right:2px solid #808080;border-bottom:2px solid #808080;border-left:1px solid #fff;border-top:1px solid #fff"></div><svg class="a" style="left:191px;top:129px" width="9" height="5"><path d="M0 0h9l-4.5 5z" fill="#000"/></svg><div class="a" style="left:216px;top:118px;width:1055px;height:28px;background:#f0f0f0;border-left:1px solid #a0a0a0;border-top:1px solid #a0a0a0;border-right:1px solid #fff;border-bottom:1px solid #fff"></div><div class="t" style="left:218px;top:121px;font-size:16px;font-weight:bold">Color Space: HDTV Rec709 , White Point: D65, EOTF:&nbsp; SDR, Power law (black compensation) w/gamma = 2.40, # of measures: 0 [18:26:54]</div><div class="a" style="left:1278px;top:120px;width:17px;height:12px;background:#f0f0f0;border-top:1px solid #fff;border-left:1px solid #fff;border-right:2px solid #808080;border-bottom:2px solid #808080"></div><svg class="a" style="left:1282px;top:123px" width="9" height="5"><path d="M1.5 4h6L4.5 1z" fill="#000"/></svg><div class="a" style="left:1278px;top:133px;width:17px;height:12px;background:#f0f0f0;border-top:1px solid #fff;border-left:1px solid #fff;border-right:2px solid #808080;border-bottom:2px solid #808080"></div><svg class="a" style="left:1282px;top:136px" width="9" height="5"><path d="M1.5 1h6L4.5 4z" fill="#000"/></svg><div class="a" style="left:1311px;top:97px;width:306px;height:57px;border:1px solid #6e6e6e;border-right-width:2px;border-bottom-width:2px;background:#f0f0f0"></div><div class="a" style="left:1312px;top:98px;width:303px;height:18px;background:linear-gradient(90deg,#e1e8f3,#edf2f9);border-bottom:1px solid #8c8c8c;border-radius:5px 5px 0 0;box-shadow:-1px -1px 0 #6e6e6e;"></div><div class="t" style="left:1318px;top:102px;font-size:12px;font-weight:bold;color:#3f3636;letter-spacing:0.8px">Sensor</div><div class="a" style="left:1313px;top:117px;width:296px;height:17px;background:#ededed"></div><div class="t" style="left:1316px;top:118px;font-size:13px;letter-spacing:0.55px">Simulated sensor</div><div class="a" style="left:1315px;top:134px;width:110px;height:17px;background:#ededed"></div><div class="t" style="left:1318px;top:135px;font-size:13px;letter-spacing:0.45px">Adaptive</div><svg class="a" style="left:1424px;top:135px" width="12" height="13"><path d="M0.5 0.5l11 6-11 6z" fill="#5fd25a" stroke="#3a9a3a" stroke-width="0.8"/></svg><svg class="a" style="left:1587px;top:132px" width="18" height="18" viewBox="0 0 18 18"><path d="M0.5 3.5l10-3 0.5 14.5-10 2.5z" fill="#1f55c0"/><path d="M2.5 5l6.5-2 0.3 10.5-6.5 1.8z" fill="#d9ebfc"/><path d="M3.5 10l2 2.2 3-4.5" fill="none" stroke="#d9a830" stroke-width="1.5"/><path d="M8 14l7.5-4.5" stroke="#3f86e0" stroke-width="2"/><circle cx="16" cy="9.2" r="1.4" fill="#e05a3a"/></svg><div class="a" style="left:1621px;top:97px;width:120px;height:57px;border:1px solid #6e6e6e;border-right-width:2px;border-bottom-width:2px;background:#f0f0f0"></div><div class="a" style="left:1622px;top:98px;width:117px;height:18px;background:linear-gradient(90deg,#e1e8f3,#edf2f9);border-bottom:1px solid #8c8c8c;border-radius:5px 5px 0 0;box-shadow:-1px -1px 0 #6e6e6e;"></div><div class="t" style="left:1628px;top:102px;font-size:12px;font-weight:bold;color:#3f3636;letter-spacing:0.8px">Generator</div><div class="t" style="left:1624px;top:119px;font-size:13px;letter-spacing:0.35px">Raspberry Pi</div><svg class="a" style="left:1718px;top:134px" width="18" height="18" viewBox="0 0 18 18"><path d="M0.5 3.5l10-3 0.5 14.5-10 2.5z" fill="#1f55c0"/><path d="M2.5 5l6.5-2 0.3 10.5-6.5 1.8z" fill="#d9ebfc"/><path d="M3.5 10l2 2.2 3-4.5" fill="none" stroke="#d9a830" stroke-width="1.5"/><path d="M8 14l7.5-4.5" stroke="#3f86e0" stroke-width="2"/><circle cx="16" cy="9.2" r="1.4" fill="#e05a3a"/></svg><div class="a" style="left:1745px;top:97px;width:150px;height:57px;border:1px solid #6e6e6e;border-right-width:2px;border-bottom-width:2px;background:#f0f0f0"></div><div class="a" style="left:1746px;top:98px;width:147px;height:18px;background:linear-gradient(90deg,#e1e8f3,#edf2f9);border-bottom:1px solid #8c8c8c;border-radius:5px 5px 0 0;box-shadow:-1px -1px 0 #6e6e6e;"></div><div class="t" style="left:1752px;top:102px;font-size:12px;font-weight:bold;color:#3f3636;letter-spacing:0.8px">Parameters</div><div class="a" style="left:1755px;top:119px;width:13px;height:13px;border:1px solid #555;border-top-width:2px;border-left-width:2px;border-right-color:#e8e8e8;border-bottom-color:#e8e8e8;background:#fff"></div><div class="t" style="left:1773px;top:119px;font-size:13px;letter-spacing:0.3px">Reference</div><div class="a" style="left:1755px;top:136px;width:13px;height:13px;border:1px solid #c0c0c0;border-top-width:2px;border-left-width:2px;border-right-color:#e8e8e8;border-bottom-color:#e8e8e8;background:#f4f4f4"></div><div class="t" style="left:1773px;top:136px;font-size:13px;color:#a8a8a8;letter-spacing:0.43px">XYZ Adjustment</div><div class="a" style="left:5px;top:162px;width:1804px;height:216px;border:1px solid #6e6e6e;border-right-width:2px;border-bottom-width:2px;background:#f0f0f0"></div><div class="a" style="left:6px;top:163px;width:1801px;height:18px;background:linear-gradient(90deg,#e1e8f3,#edf2f9);border-bottom:1px solid #8c8c8c;border-radius:5px 5px 0 0;box-shadow:-1px -1px 0 #6e6e6e;"></div><div class="t" style="left:14px;top:166px;font-size:11px;font-weight:bold;color:#3f3636">( Average dE: 2.44 [0.25,1.62,1.11] max: 7.24 [CIE2000] )</div><div class="a" style="left:6px;top:179px;width:1px;height:197px;background:#e8e800"></div><div class="a" style="left:6px;top:376px;width:1802px;height:1px;background:#e8e800"></div><div class="a" style="left:1806px;top:165px;width:1px;height:212px;background:#e8e800"></div><div class="a" style="left:1790px;top:179px;width:17px;height:1px;background:#e8e800"></div><div class="a" style="left:8px;top:177px;width:1783px;height:178px;background:#f0f0f0"></div><div class="a" style="left:9px;top:177px;width:1782px;height:2px;background:#6e6e6e"></div><div class="a" style="left:9px;top:177px;width:2px;height:177px;background:#6e6e6e"></div><div class="a" style="left:11px;top:179px;width:52px;height:21px;background:#f0f0f0"></div><div class="t" style="left:11px;top:184px;font-size:13px;font-weight:bold"><div style="width:52px;text-align:center">Color</div></div><div class="a" style="left:64px;top:179px;width:210px;height:21px;background:#f0c8c8;border-left:1px solid #fff;border-top:1px solid #fff"></div><div class="t" style="left:64px;top:184px;font-size:13px;font-weight:bold"><div style="width:210px;text-align:center">Red</div></div><div class="a" style="left:275px;top:179px;width:212px;height:21px;background:#c8f0c8;border-left:1px solid #fff;border-top:1px solid #fff"></div><div class="t" style="left:275px;top:184px;font-size:13px;font-weight:bold"><div style="width:212px;text-align:center">Green</div></div><div class="a" style="left:488px;top:179px;width:209px;height:21px;background:#c8c8f0;border-left:1px solid #fff;border-top:1px solid #fff"></div><div class="t" style="left:488px;top:184px;font-size:13px;font-weight:bold"><div style="width:209px;text-align:center">Blue</div></div><div class="a" style="left:698px;top:179px;width:213px;height:21px;background:#f0f0c8;border-left:1px solid #fff;border-top:1px solid #fff"></div><div class="t" style="left:698px;top:184px;font-size:13px;font-weight:bold"><div style="width:213px;text-align:center">Yellow</div></div><div class="a" style="left:912px;top:179px;width:209px;height:21px;background:#c8f0f0;border-left:1px solid #fff;border-top:1px solid #fff"></div><div class="t" style="left:912px;top:184px;font-size:13px;font-weight:bold"><div style="width:209px;text-align:center">Cyan</div></div><div class="a" style="left:1122px;top:179px;width:226px;height:21px;background:#f0c8f0;border-left:1px solid #fff;border-top:1px solid #fff"></div><div class="t" style="left:1122px;top:184px;font-size:13px;font-weight:bold"><div style="width:226px;text-align:center">Magenta</div></div><div class="a" style="left:1349px;top:179px;width:211px;height:21px;background:#f0f0f0;border-left:1px solid #fff;border-top:1px solid #fff"></div><div class="t" style="left:1349px;top:184px;font-size:13px;font-weight:bold"><div style="width:211px;text-align:center">White</div></div><div class="a" style="left:1561px;top:179px;width:209px;height:21px;background:#f0f0f0;border-left:1px solid #fff;border-top:1px solid #fff"></div><div class="t" style="left:1561px;top:184px;font-size:13px;font-weight:bold"><div style="width:209px;text-align:center">Black</div></div><div class="a" style="left:63px;top:177px;width:1px;height:177px;background:#6e6e6e"></div><div class="a" style="left:274px;top:177px;width:1px;height:177px;background:#a0a0a0"></div><div class="a" style="left:487px;top:177px;width:1px;height:177px;background:#a0a0a0"></div><div class="a" style="left:697px;top:177px;width:1px;height:177px;background:#a0a0a0"></div><div class="a" style="left:911px;top:177px;width:1px;height:177px;background:#a0a0a0"></div><div class="a" style="left:1121px;top:177px;width:1px;height:177px;background:#a0a0a0"></div><div class="a" style="left:1348px;top:177px;width:1px;height:177px;background:#a0a0a0"></div><div class="a" style="left:1560px;top:177px;width:1px;height:177px;background:#a0a0a0"></div><div class="a" style="left:1770px;top:177px;width:1px;height:177px;background:#a0a0a0"></div><div class="a" style="left:274px;top:177px;width:1px;height:24px;background:#6e6e6e"></div><div class="a" style="left:487px;top:177px;width:1px;height:24px;background:#6e6e6e"></div><div class="a" style="left:697px;top:177px;width:1px;height:24px;background:#6e6e6e"></div><div class="a" style="left:911px;top:177px;width:1px;height:24px;background:#6e6e6e"></div><div class="a" style="left:1121px;top:177px;width:1px;height:24px;background:#6e6e6e"></div><div class="a" style="left:1348px;top:177px;width:1px;height:24px;background:#6e6e6e"></div><div class="a" style="left:1560px;top:177px;width:1px;height:24px;background:#6e6e6e"></div><div class="a" style="left:1770px;top:177px;width:1px;height:24px;background:#6e6e6e"></div><div class="a" style="left:11px;top:200px;width:1760px;height:1px;background:#6e6e6e"></div><div class="a" style="left:11px;top:201px;width:52px;height:24px;background:#f0f0f0"></div><div class="t" style="left:11px;top:207px;font-size:13px;font-weight:bold;letter-spacing:-0.3px"><div style="width:52px;text-align:center">x</div></div><div class="a" style="left:11px;top:225px;width:52px;height:1px;background:#6e6e6e"></div><div class="a" style="left:64px;top:201px;width:210px;height:24px;background:#fff"></div><div class="t" style="left:64px;top:208px;font-size:12px;letter-spacing:-0.3px"><div style="width:209px;text-align:right">0.6507</div></div><div class="a" style="left:64px;top:225px;width:210px;height:1px;background:#c0c0c0"></div><div class="a" style="left:275px;top:201px;width:212px;height:24px;background:#fff"></div><div class="t" style="left:275px;top:208px;font-size:12px;letter-spacing:-0.3px"><div style="width:211px;text-align:right">0.3024</div></div><div class="a" style="left:275px;top:225px;width:212px;height:1px;background:#c0c0c0"></div><div class="a" style="left:488px;top:201px;width:209px;height:24px;background:#fff"></div><div class="t" style="left:488px;top:208px;font-size:12px;letter-spacing:-0.3px"><div style="width:208px;text-align:right">0.1483</div></div><div class="a" style="left:488px;top:225px;width:209px;height:1px;background:#c0c0c0"></div><div class="a" style="left:698px;top:201px;width:213px;height:24px;background:#fff"></div><div class="t" style="left:698px;top:208px;font-size:12px;letter-spacing:-0.3px"><div style="width:212px;text-align:right">0.4289</div></div><div class="a" style="left:698px;top:225px;width:213px;height:1px;background:#c0c0c0"></div><div class="a" style="left:912px;top:201px;width:209px;height:24px;background:#fff"></div><div class="t" style="left:912px;top:208px;font-size:12px;letter-spacing:-0.3px"><div style="width:208px;text-align:right">0.2202</div></div><div class="a" style="left:912px;top:225px;width:209px;height:1px;background:#c0c0c0"></div><div class="a" style="left:1122px;top:201px;width:226px;height:24px;background:#fff"></div><div class="t" style="left:1122px;top:208px;font-size:12px;letter-spacing:-0.3px"><div style="width:225px;text-align:right">0.3160</div></div><div class="a" style="left:1122px;top:225px;width:226px;height:1px;background:#c0c0c0"></div><div class="a" style="left:1349px;top:201px;width:211px;height:24px;background:#fff"></div><div class="t" style="left:1349px;top:208px;font-size:12px;letter-spacing:-0.3px"><div style="width:210px;text-align:right">0.3132</div></div><div class="a" style="left:1349px;top:225px;width:211px;height:1px;background:#c0c0c0"></div><div class="a" style="left:1561px;top:201px;width:209px;height:24px;background:#fff"></div><div class="t" style="left:1561px;top:208px;font-size:12px;letter-spacing:-0.3px"><div style="width:208px;text-align:right">0.3333</div></div><div class="a" style="left:1561px;top:225px;width:209px;height:1px;background:#c0c0c0"></div><div class="a" style="left:11px;top:226px;width:52px;height:24px;background:#f0f0f0"></div><div class="t" style="left:11px;top:232px;font-size:13px;font-weight:bold;letter-spacing:-0.3px"><div style="width:52px;text-align:center">y</div></div><div class="a" style="left:11px;top:250px;width:52px;height:1px;background:#6e6e6e"></div><div class="a" style="left:64px;top:226px;width:210px;height:24px;background:#fff"></div><div class="t" style="left:64px;top:233px;font-size:12px;letter-spacing:-0.3px"><div style="width:209px;text-align:right">0.3237</div></div><div class="a" style="left:64px;top:250px;width:210px;height:1px;background:#c0c0c0"></div><div class="a" style="left:275px;top:226px;width:212px;height:24px;background:#fff"></div><div class="t" style="left:275px;top:233px;font-size:12px;letter-spacing:-0.3px"><div style="width:211px;text-align:right">0.6084</div></div><div class="a" style="left:275px;top:250px;width:212px;height:1px;background:#c0c0c0"></div><div class="a" style="left:488px;top:226px;width:209px;height:24px;background:#fff"></div><div class="t" style="left:488px;top:233px;font-size:12px;letter-spacing:-0.3px"><div style="width:208px;text-align:right">0.0571</div></div><div class="a" style="left:488px;top:250px;width:209px;height:1px;background:#c0c0c0"></div><div class="a" style="left:698px;top:226px;width:213px;height:24px;background:#fff"></div><div class="t" style="left:698px;top:233px;font-size:12px;letter-spacing:-0.3px"><div style="width:212px;text-align:right">0.5049</div></div><div class="a" style="left:698px;top:250px;width:213px;height:1px;background:#c0c0c0"></div><div class="a" style="left:912px;top:226px;width:209px;height:24px;background:#fff"></div><div class="t" style="left:912px;top:233px;font-size:12px;letter-spacing:-0.3px"><div style="width:208px;text-align:right">0.3145</div></div><div class="a" style="left:912px;top:250px;width:209px;height:1px;background:#c0c0c0"></div><div class="a" style="left:1122px;top:226px;width:226px;height:24px;background:#fff"></div><div class="t" style="left:1122px;top:233px;font-size:12px;letter-spacing:-0.3px"><div style="width:225px;text-align:right">0.1466</div></div><div class="a" style="left:1122px;top:250px;width:226px;height:1px;background:#c0c0c0"></div><div class="a" style="left:1349px;top:226px;width:211px;height:24px;background:#fff"></div><div class="t" style="left:1349px;top:233px;font-size:12px;letter-spacing:-0.3px"><div style="width:210px;text-align:right">0.3194</div></div><div class="a" style="left:1349px;top:250px;width:211px;height:1px;background:#c0c0c0"></div><div class="a" style="left:1561px;top:226px;width:209px;height:24px;background:#fff"></div><div class="t" style="left:1561px;top:233px;font-size:12px;letter-spacing:-0.3px"><div style="width:208px;text-align:right">0.3333</div></div><div class="a" style="left:1561px;top:250px;width:209px;height:1px;background:#c0c0c0"></div><div class="a" style="left:11px;top:251px;width:52px;height:24px;background:#f0f0f0"></div><div class="t" style="left:11px;top:257px;font-size:13px;font-weight:bold;letter-spacing:-0.3px"><div style="width:52px;text-align:center">Y</div></div><div class="a" style="left:11px;top:275px;width:52px;height:1px;background:#6e6e6e"></div><div class="a" style="left:64px;top:251px;width:210px;height:24px;background:#fff"></div><div class="t" style="left:64px;top:258px;font-size:12px;letter-spacing:-0.3px"><div style="width:209px;text-align:right">20.712</div></div><div class="a" style="left:64px;top:275px;width:210px;height:1px;background:#c0c0c0"></div><div class="a" style="left:275px;top:251px;width:212px;height:24px;background:#fff"></div><div class="t" style="left:275px;top:258px;font-size:12px;letter-spacing:-0.3px"><div style="width:211px;text-align:right">70.898</div></div><div class="a" style="left:275px;top:275px;width:212px;height:1px;background:#c0c0c0"></div><div class="a" style="left:488px;top:251px;width:209px;height:24px;background:#fff"></div><div class="t" style="left:488px;top:258px;font-size:12px;letter-spacing:-0.3px"><div style="width:208px;text-align:right">7.310</div></div><div class="a" style="left:488px;top:275px;width:209px;height:1px;background:#c0c0c0"></div><div class="a" style="left:698px;top:251px;width:213px;height:24px;background:#fff"></div><div class="t" style="left:698px;top:258px;font-size:12px;letter-spacing:-0.3px"><div style="width:212px;text-align:right">93.204</div></div><div class="a" style="left:698px;top:275px;width:213px;height:1px;background:#c0c0c0"></div><div class="a" style="left:912px;top:251px;width:209px;height:24px;background:#fff"></div><div class="t" style="left:912px;top:258px;font-size:12px;letter-spacing:-0.3px"><div style="width:208px;text-align:right">77.291</div></div><div class="a" style="left:912px;top:275px;width:209px;height:1px;background:#c0c0c0"></div><div class="a" style="left:1122px;top:251px;width:226px;height:24px;background:#fff"></div><div class="t" style="left:1122px;top:258px;font-size:12px;letter-spacing:-0.3px"><div style="width:225px;text-align:right">27.646</div></div><div class="a" style="left:1122px;top:275px;width:226px;height:1px;background:#c0c0c0"></div><div class="a" style="left:1349px;top:251px;width:211px;height:24px;background:#fff"></div><div class="t" style="left:1349px;top:258px;font-size:12px;letter-spacing:-0.3px"><div style="width:210px;text-align:right">99.372</div></div><div class="a" style="left:1349px;top:275px;width:211px;height:1px;background:#c0c0c0"></div><div class="a" style="left:1561px;top:251px;width:209px;height:24px;background:#fff"></div><div class="t" style="left:1561px;top:258px;font-size:12px;letter-spacing:-0.3px"><div style="width:208px;text-align:right">0.000</div></div><div class="a" style="left:1561px;top:275px;width:209px;height:1px;background:#c0c0c0"></div><div class="a" style="left:11px;top:276px;width:52px;height:24px;background:#f0f0f0"></div><div class="t" style="left:11px;top:282px;font-size:13px;font-weight:bold;letter-spacing:-0.3px"><div style="width:52px;text-align:center">Delta E</div></div><div class="a" style="left:11px;top:300px;width:52px;height:1px;background:#6e6e6e"></div><div class="a" style="left:64px;top:276px;width:210px;height:24px;background:#b0ffb0"></div><div class="t" style="left:64px;top:283px;font-size:13px;font-weight:bold;letter-spacing:-0.3px"><div style="width:209px;text-align:right">1.0</div></div><div class="a" style="left:64px;top:300px;width:210px;height:1px;background:#c0c0c0"></div><div class="a" style="left:275px;top:276px;width:212px;height:24px;background:#b0ffb0"></div><div class="t" style="left:275px;top:283px;font-size:13px;font-weight:bold;letter-spacing:-0.3px"><div style="width:211px;text-align:right">0.8</div></div><div class="a" style="left:275px;top:300px;width:212px;height:1px;background:#c0c0c0"></div><div class="a" style="left:488px;top:276px;width:209px;height:24px;background:#b0ffb0"></div><div class="t" style="left:488px;top:283px;font-size:13px;font-weight:bold;letter-spacing:-0.3px"><div style="width:208px;text-align:right">0.9</div></div><div class="a" style="left:488px;top:300px;width:209px;height:1px;background:#c0c0c0"></div><div class="a" style="left:698px;top:276px;width:213px;height:24px;background:#ffffb0"></div><div class="t" style="left:698px;top:283px;font-size:13px;font-weight:bold;letter-spacing:-0.3px"><div style="width:212px;text-align:right">2.2</div></div><div class="a" style="left:698px;top:300px;width:213px;height:1px;background:#c0c0c0"></div><div class="a" style="left:912px;top:276px;width:209px;height:24px;background:#ffb0b0"></div><div class="t" style="left:912px;top:283px;font-size:13px;font-weight:bold;letter-spacing:-0.3px"><div style="width:208px;text-align:right">3.7</div></div><div class="a" style="left:912px;top:300px;width:209px;height:1px;background:#c0c0c0"></div><div class="a" style="left:1122px;top:276px;width:226px;height:24px;background:#b0ffb0"></div><div class="t" style="left:1122px;top:283px;font-size:13px;font-weight:bold;letter-spacing:-0.3px"><div style="width:225px;text-align:right">1.1</div></div><div class="a" style="left:1122px;top:300px;width:226px;height:1px;background:#c0c0c0"></div><div class="a" style="left:1349px;top:276px;width:211px;height:24px;background:#ffb0b0"></div><div class="t" style="left:1349px;top:283px;font-size:13px;font-weight:bold;letter-spacing:-0.3px"><div style="width:210px;text-align:right">7.2</div></div><div class="a" style="left:1349px;top:300px;width:211px;height:1px;background:#c0c0c0"></div><div class="a" style="left:1561px;top:276px;width:209px;height:24px;background:#e0e0e0"></div><div class="a" style="left:1561px;top:300px;width:209px;height:1px;background:#c0c0c0"></div><div class="a" style="left:11px;top:301px;width:52px;height:24px;background:#f0f0f0"></div><div class="t" style="left:11px;top:307px;font-size:13px;font-weight:bold;letter-spacing:-0.3px"><div style="width:52px;text-align:center">delta xy</div></div><div class="a" style="left:11px;top:325px;width:52px;height:1px;background:#6e6e6e"></div><div class="a" style="left:64px;top:301px;width:210px;height:24px;background:#f0f0f0"></div><div class="t" style="left:64px;top:308px;font-size:12px;letter-spacing:-0.3px"><div style="width:209px;text-align:right">0.0124</div></div><div class="a" style="left:64px;top:325px;width:210px;height:1px;background:#c0c0c0"></div><div class="a" style="left:275px;top:301px;width:212px;height:24px;background:#f0f0f0"></div><div class="t" style="left:275px;top:308px;font-size:12px;letter-spacing:-0.3px"><div style="width:211px;text-align:right">0.0088</div></div><div class="a" style="left:275px;top:325px;width:212px;height:1px;background:#c0c0c0"></div><div class="a" style="left:488px;top:301px;width:209px;height:24px;background:#f0f0f0"></div><div class="t" style="left:488px;top:308px;font-size:12px;letter-spacing:-0.3px"><div style="width:208px;text-align:right">0.0034</div></div><div class="a" style="left:488px;top:325px;width:209px;height:1px;background:#c0c0c0"></div><div class="a" style="left:698px;top:301px;width:213px;height:24px;background:#f0f0f0"></div><div class="t" style="left:698px;top:308px;font-size:12px;letter-spacing:-0.3px"><div style="width:212px;text-align:right">0.0096</div></div><div class="a" style="left:698px;top:325px;width:213px;height:1px;background:#c0c0c0"></div><div class="a" style="left:912px;top:301px;width:209px;height:24px;background:#f0f0f0"></div><div class="t" style="left:912px;top:308px;font-size:12px;letter-spacing:-0.3px"><div style="width:208px;text-align:right">0.0149</div></div><div class="a" style="left:912px;top:325px;width:209px;height:1px;background:#c0c0c0"></div><div class="a" style="left:1122px;top:301px;width:226px;height:24px;background:#f0f0f0"></div><div class="t" style="left:1122px;top:308px;font-size:12px;letter-spacing:-0.3px"><div style="width:225px;text-align:right">0.0090</div></div><div class="a" style="left:1122px;top:325px;width:226px;height:1px;background:#c0c0c0"></div><div class="a" style="left:1349px;top:301px;width:211px;height:24px;background:#f0f0f0"></div><div class="t" style="left:1349px;top:308px;font-size:12px;letter-spacing:-0.3px"><div style="width:210px;text-align:right">0.0096</div></div><div class="a" style="left:1349px;top:325px;width:211px;height:1px;background:#c0c0c0"></div><div class="a" style="left:1561px;top:301px;width:209px;height:24px;background:#f0f0f0"></div><div class="a" style="left:1561px;top:325px;width:209px;height:1px;background:#c0c0c0"></div><div class="a" style="left:11px;top:326px;width:52px;height:24px;background:#f0f0f0"></div><div class="t" style="left:11px;top:332px;font-size:13px;font-weight:bold;letter-spacing:-0.3px"><div style="width:52px;text-align:center">delta L</div></div><div class="a" style="left:11px;top:350px;width:52px;height:1px;background:#6e6e6e"></div><div class="a" style="left:64px;top:326px;width:210px;height:24px;background:#e0e0e0"></div><div class="t" style="left:64px;top:333px;font-size:12px;letter-spacing:-0.3px"><div style="width:209px;text-align:right">-2.0 %</div></div><div class="a" style="left:64px;top:350px;width:210px;height:1px;background:#c0c0c0"></div><div class="a" style="left:275px;top:326px;width:212px;height:24px;background:#e0e0e0"></div><div class="t" style="left:275px;top:333px;font-size:12px;letter-spacing:-0.3px"><div style="width:211px;text-align:right">-0.2 %</div></div><div class="a" style="left:275px;top:350px;width:212px;height:1px;background:#c0c0c0"></div><div class="a" style="left:488px;top:326px;width:209px;height:24px;background:#e0e0e0"></div><div class="t" style="left:488px;top:333px;font-size:12px;letter-spacing:-0.3px"><div style="width:208px;text-align:right">+1.9 %</div></div><div class="a" style="left:488px;top:350px;width:209px;height:1px;background:#c0c0c0"></div><div class="a" style="left:698px;top:326px;width:213px;height:24px;background:#e0e0e0"></div><div class="t" style="left:698px;top:333px;font-size:12px;letter-spacing:-0.3px"><div style="width:212px;text-align:right">+1.1 %</div></div><div class="a" style="left:698px;top:350px;width:213px;height:1px;background:#c0c0c0"></div><div class="a" style="left:912px;top:326px;width:209px;height:24px;background:#e0e0e0"></div><div class="t" style="left:912px;top:333px;font-size:12px;letter-spacing:-0.3px"><div style="width:208px;text-align:right">-1.2 %</div></div><div class="a" style="left:912px;top:350px;width:209px;height:1px;background:#c0c0c0"></div><div class="a" style="left:1122px;top:326px;width:226px;height:24px;background:#e0e0e0"></div><div class="t" style="left:1122px;top:333px;font-size:12px;letter-spacing:-0.3px"><div style="width:225px;text-align:right">-2.3 %</div></div><div class="a" style="left:1122px;top:350px;width:226px;height:1px;background:#c0c0c0"></div><div class="a" style="left:1349px;top:326px;width:211px;height:24px;background:#e0e0e0"></div><div class="a" style="left:1349px;top:350px;width:211px;height:1px;background:#c0c0c0"></div><div class="a" style="left:1561px;top:326px;width:209px;height:24px;background:#e0e0e0"></div><div class="a" style="left:1561px;top:350px;width:209px;height:1px;background:#c0c0c0"></div><div class="a" style="left:11px;top:351px;width:52px;height:3px;background:#f0f0f0"></div><div class="a" style="left:64px;top:351px;width:210px;height:3px;background:#fff"></div><div class="a" style="left:275px;top:351px;width:212px;height:3px;background:#fff"></div><div class="a" style="left:488px;top:351px;width:209px;height:3px;background:#fff"></div><div class="a" style="left:698px;top:351px;width:213px;height:3px;background:#fff"></div><div class="a" style="left:912px;top:351px;width:209px;height:3px;background:#fff"></div><div class="a" style="left:1122px;top:351px;width:226px;height:3px;background:#fff"></div><div class="a" style="left:1349px;top:351px;width:211px;height:3px;background:#fff"></div><div class="a" style="left:1561px;top:351px;width:209px;height:3px;background:#fff"></div><div class="a" style="left:63px;top:201px;width:1px;height:153px;background:#6e6e6e"></div><div class="a" style="left:274px;top:201px;width:1px;height:153px;background:#c0c0c0"></div><div class="a" style="left:487px;top:201px;width:1px;height:153px;background:#c0c0c0"></div><div class="a" style="left:697px;top:201px;width:1px;height:153px;background:#c0c0c0"></div><div class="a" style="left:911px;top:201px;width:1px;height:153px;background:#c0c0c0"></div><div class="a" style="left:1121px;top:201px;width:1px;height:153px;background:#c0c0c0"></div><div class="a" style="left:1348px;top:201px;width:1px;height:153px;background:#c0c0c0"></div><div class="a" style="left:1560px;top:201px;width:1px;height:153px;background:#c0c0c0"></div><div class="a" style="left:1770px;top:201px;width:1px;height:153px;background:#c0c0c0"></div><div class="a" style="left:1771px;top:179px;width:19px;height:176px;background:#f0f0f0;border-left:1px solid #fff"></div><div class="a" style="left:1779px;top:193px;width:2px;height:144px;background:#808080"></div><div class="a" style="left:9px;top:354px;width:1782px;height:19px;background:#f0f0f0"></div><div class="a" style="left:9px;top:373px;width:1797px;height:1px;background:#fff"></div><svg class="a" style="left:14px;top:359px" width="8" height="10"><path d="M7 0v10L0 5z" fill="#a0a0a0"/></svg><svg class="a" style="left:1759px;top:359px" width="8" height="10"><path d="M0 0v10L7 5z" fill="#a0a0a0"/></svg><div class="a" style="left:1815px;top:162px;width:80px;height:101px;border:1px solid #6e6e6e;border-right-width:2px;border-bottom-width:2px;background:#f0f0f0"></div><div class="a" style="left:1816px;top:163px;width:77px;height:16px;background:linear-gradient(90deg,#e1e8f3,#edf2f9);border-bottom:1px solid #8c8c8c;border-radius:5px 5px 0 0;box-shadow:-1px -1px 0 #6e6e6e;"></div><div class="t" style="left:1822px;top:167px;font-size:12px;font-weight:bold;color:#3f3636;letter-spacing:0.8px">Display</div><svg class="a" style="left:1815px;top:175px" width="20" height="85" viewBox="1815 175 20 85"><circle cx="1828.7" cy="187" r="5" fill="#f2f2f2"/><path d="M1825.2 190.5A5 5 0 0 1 1832.2 183.5" fill="none" stroke="#a8a8a8" stroke-width="1.4"/><circle cx="1828.7" cy="203" r="5" fill="#fff"/><path d="M1825.2 206.5A5 5 0 0 1 1832.2 199.5" fill="none" stroke="#707070" stroke-width="1.4"/><circle cx="1828.7" cy="218.5" r="5" fill="#fff"/><path d="M1825.2 222.0A5 5 0 0 1 1832.2 215.0" fill="none" stroke="#707070" stroke-width="1.4"/><circle cx="1828.7" cy="234.5" r="5" fill="#fff"/><path d="M1825.2 238.0A5 5 0 0 1 1832.2 231.0" fill="none" stroke="#707070" stroke-width="1.4"/><circle cx="1828.7" cy="250" r="5" fill="#fff"/><path d="M1825.2 253.5A5 5 0 0 1 1832.2 246.5" fill="none" stroke="#707070" stroke-width="1.4"/><circle cx="1828.7" cy="250" r="2.2" fill="#000"/></svg><div class="t" style="left:1841px;top:181px;font-size:13px;color:#a0a0a0;letter-spacing:0.3px">Sensor</div><div class="t" style="left:1841px;top:197px;font-size:13px;color:#000;letter-spacing:0.3px">RGB</div><div class="t" style="left:1841px;top:212px;font-size:13px;color:#000;letter-spacing:0.3px">XYZ</div><div class="t" style="left:1841px;top:228px;font-size:13px;color:#000;letter-spacing:0.3px">xyz</div><div class="t" style="left:1841px;top:244px;font-size:13px;color:#000;letter-spacing:0.3px">xyY</div><div class="a" style="left:1813px;top:262px;width:81px;height:116px;background:#7a7a7a"></div><div class="a" style="left:1815px;top:264px;width:77px;height:29px;background:#ebebeb;border-top:1px solid #fff;border-left:1px solid #fff"></div><div class="t" style="left:1863px;top:272px;font-size:13px;">Go</div><div class="a" style="left:1815px;top:294px;width:77px;height:29px;background:#ebebeb;border-top:1px solid #fff;border-left:1px solid #fff"></div><div class="t" style="left:1851px;top:302px;font-size:13px;">Delete</div><div class="a" style="left:1815px;top:324px;width:77px;height:29px;background:#ebebeb;border-top:1px solid #fff;border-left:1px solid #fff"></div><div class="t" style="left:1858px;top:332px;font-size:13px;">Refs</div><svg class="a" style="left:1815px;top:266px" width="36" height="28" viewBox="1815 266 36 28"><defs><radialGradient id="gb1" cx="0.4" cy="0.3" r="0.75"><stop offset="0" stop-color="#fff"/><stop offset="0.28" stop-color="#e03030"/><stop offset="1" stop-color="#700"/></radialGradient><radialGradient id="gb2" cx="0.4" cy="0.3" r="0.75"><stop offset="0" stop-color="#fff"/><stop offset="0.28" stop-color="#3a6ae8"/><stop offset="1" stop-color="#024"/></radialGradient><radialGradient id="gb3" cx="0.4" cy="0.3" r="0.75"><stop offset="0" stop-color="#fff"/><stop offset="0.28" stop-color="#30d030"/><stop offset="1" stop-color="#060"/></radialGradient><radialGradient id="gb4" cx="0.4" cy="0.3" r="0.75"><stop offset="0" stop-color="#fff"/><stop offset="0.28" stop-color="#40e0e8"/><stop offset="1" stop-color="#077"/></radialGradient><radialGradient id="gb5" cx="0.4" cy="0.3" r="0.75"><stop offset="0" stop-color="#fff"/><stop offset="0.28" stop-color="#c070f0"/><stop offset="1" stop-color="#537"/></radialGradient><radialGradient id="gb6" cx="0.4" cy="0.3" r="0.75"><stop offset="0" stop-color="#fff"/><stop offset="0.28" stop-color="#f8e830"/><stop offset="1" stop-color="#a80"/></radialGradient></defs><circle cx="1839" cy="268" r="4.5" fill="url(#gb6)"/><circle cx="1845" cy="273" r="5" fill="url(#gb5)"/><circle cx="1845" cy="281.5" r="5.5" fill="url(#gb4)"/><circle cx="1838.5" cy="283" r="7" fill="url(#gb3)"/><circle cx="1823.5" cy="287" r="8" fill="url(#gb1)"/><circle cx="1831.5" cy="287" r="8" fill="url(#gb2)"/></svg><svg class="a" style="left:1818px;top:295px" width="30" height="28" viewBox="0 0 30 28"><defs><linearGradient id="binl" x1="0" y1="0" x2="1" y2="1"><stop offset="0" stop-color="#e4f6ff"/><stop offset="0.6" stop-color="#a8d8f4"/><stop offset="1" stop-color="#5aa8dc"/></linearGradient></defs><path d="M1 5q13-6 27-3l-3 21q-8 5-19 2z" fill="url(#binl)" stroke="#6ab0e0" stroke-width="0.8"/><ellipse cx="15" cy="22" rx="9" ry="3" fill="#cdeaf8" opacity="0.8"/><path d="M14 9a6 6 0 0 1 7 3l1.5-1.5v5h-5l2-1.5a3.5 3.5 0 0 0-5.5-1.5z M18 20a6 6 0 0 1-7-3l-1.5 1.5v-5h5l-2 1.5a3.5 3.5 0 0 0 5.5 1.5z" fill="#1a9a2a"/></svg><svg class="a" style="left:1818px;top:328px" width="33" height="24" viewBox="0 0 33 24"><path d="M0 24V10l3-2 2-3 2 3 2 5 2-1 2 3 3-4 2-5 3-2 3 4 2 5 2 1 2-1 3 3v12z" fill="#ff0" stroke="#ff0" stroke-width="1.2"/><rect x="0.5" y="12" width="3" height="12" fill="#00007a"/><rect x="3.5" y="9" width="3" height="15" fill="#e000e0"/><rect x="6.5" y="6" width="3" height="18" fill="#0000ff"/><rect x="9.5" y="12" width="3" height="12" fill="#00e0ff"/><rect x="12.5" y="12" width="4" height="12" fill="#00ff00"/><rect x="16.5" y="5" width="5" height="19" fill="#ffff00"/><rect x="21.5" y="4" width="3" height="20" fill="#800000"/><rect x="24.5" y="11" width="8" height="13" fill="#ff0000"/></svg><div class="a" style="left:1818px;top:358px;width:56px;height:18px;background:#f0f0f0"></div><div class="a" style="left:1820px;top:361px;width:12px;height:13px;border:1px solid #333;border-right-color:#ddd;border-bottom-color:#ddd;background:#fff"></div><div class="t" style="left:1836px;top:360px;font-size:13px;letter-spacing:0.3px">Edit</div><div class="a" style="left:5px;top:387px;width:378px;height:629px;border:1px solid #6e6e6e;border-right-width:2px;border-bottom-width:2px;background:#f0f0f0"></div><div class="a" style="left:6px;top:388px;width:375px;height:18px;background:linear-gradient(90deg,#e1e8f3,#edf2f9);border-bottom:1px solid #8c8c8c;border-radius:5px 5px 0 0;box-shadow:-1px -1px 0 #6e6e6e;"></div><div class="t" style="left:12px;top:392px;font-size:12px;font-weight:bold;color:#3f3636;letter-spacing:0.8px">Selected color</div><div class="a" style="left:6px;top:406px;width:375px;height:608px;background:#ebebeb"></div><div class="a" style="left:15px;top:409px;width:113px;height:16px;background:#efefef"></div><div class="t" style="left:18px;top:410px;font-size:13px;">RGB Levels</div><div class="a" style="left:230px;top:407px;width:128px;height:15px;background:#efefef"></div><div class="t" style="left:241px;top:408px;font-size:13px;letter-spacing:0.6px">Current Measure</div><div class="a" style="left:14px;top:427px;width:201px;height:92px;background:#efefef"></div><div class="a" style="left:14px;top:477px;width:201px;height:1px;background:repeating-linear-gradient(90deg,#808080 0 3px,transparent 3px 6px)"></div><div class="t" style="left:26px;top:497px;font-size:11px;font-family:Liberation Serif,serif;font-weight:bold;color:#000">0.0%</div><div class="t" style="left:77px;top:497px;font-size:11px;font-family:Liberation Serif,serif;font-weight:bold;color:#000">0.0%</div><div class="t" style="left:128px;top:497px;font-size:11px;font-family:Liberation Serif,serif;font-weight:bold;color:#000">0.0%</div><div class="t" style="left:175px;top:497px;font-size:11px;font-family:Liberation Serif,serif;font-weight:bold;color:#000">dE 0.0</div><svg class="a" style="left:14px;top:505px" width="201" height="14" viewBox="0 0 201 14"><path d="M0.0 9 Q25.0 -3.5 50.0 9 L50.0 14 L0.0 14z" fill="#000"/><path d="M3.5 9.5 Q25.0 -1 46.5 9.5z" fill="#a00000"/><path d="M50.5 9 Q75.5 -3.5 100.5 9 L100.5 14 L50.5 14z" fill="#000"/><path d="M54.0 9.5 Q75.5 -1 97.0 9.5z" fill="#00a000"/><path d="M101.0 9 Q126.0 -3.5 151.0 9 L151.0 14 L101.0 14z" fill="#000"/><path d="M104.5 9.5 Q126.0 -1 147.5 9.5z" fill="#0000a0"/><path d="M151.5 9 Q176.5 -3.5 201.5 9 L201.5 14 L151.5 14z" fill="#000"/><path d="M155.0 9.5 Q176.5 -1 198.0 9.5z" fill="#c08a10"/><rect x="0" y="9" width="201" height="5" fill="#000"/></svg><div class="a" style="left:16px;top:532px;width:192px;height:73px;background:#efefef"></div><div class="t" style="left:36px;top:535px;font-size:13px;font-weight:bold;letter-spacing:0.4px">Measure</div><div class="t" style="left:128px;top:535px;font-size:13px;font-weight:bold;letter-spacing:0.4px">Reference</div><div class="t" style="left:18px;top:623px;font-size:13px;letter-spacing:0.5px">Target</div><div class="a" style="left:50px;top:638px;width:116px;height:89px;background:conic-gradient(from 0deg at 50% 50%, #44ff00 0deg, #a8e000 30deg, #ffc400 50deg, #ff9800 60deg, #ff5000 72deg, #ff0800 88deg, #ff0010 100deg, #ff0080 125deg, #e800a0 140deg, #9000c0 180deg, #3000f0 215deg, #0000ff 230deg, #0050c8 255deg, #00a0a0 280deg, #00d890 300deg, #00ff80 318deg, #20ff40 340deg, #44ff00 360deg);border:1px solid #000;border-bottom-color:#fff;"></div><div class="a" style="left:67px;top:651px;width:82px;height:63px;background:#000;border:1px solid #fff;border-radius:8px"></div><svg class="a" style="left:50px;top:638px" width="116" height="89"><g fill="none" stroke="#fff" stroke-width="1.4" stroke-dasharray="3 3"><line x1="58.5" y1="13" x2="58.5" y2="76"/><line x1="15" y1="44.5" x2="102" y2="44.5"/><ellipse cx="58.5" cy="44.5" rx="21" ry="15.5"/></g></svg><div class="a" style="left:220px;top:431px;width:153px;height:576px;background:#f0f0f0;border-top:2px solid #6e6e6e;border-left:2px solid #6e6e6e"></div><div class="a" style="left:222px;top:433px;width:52px;height:21px;background:#f0f0f0"></div><div class="t" style="left:222px;top:438px;font-size:12px;font-weight:bold"><div style="width:52px;text-align:center">Y cd/m<sup style="font-size:8px;vertical-align:6px">2</sup></div></div><div class="a" style="left:275px;top:433px;width:79px;height:21px;background:#fff"></div><div class="a" style="left:222px;top:454px;width:52px;height:1px;background:#6e6e6e"></div><div class="a" style="left:275px;top:454px;width:79px;height:1px;background:#c0c0c0"></div><div class="a" style="left:222px;top:455px;width:52px;height:22px;background:#f0f0f0"></div><div class="t" style="left:222px;top:460px;font-size:12px;font-weight:bold"><div style="width:52px;text-align:center">Y ftL</div></div><div class="a" style="left:275px;top:455px;width:79px;height:22px;background:#fff"></div><div class="a" style="left:222px;top:477px;width:52px;height:1px;background:#6e6e6e"></div><div class="a" style="left:275px;top:477px;width:79px;height:1px;background:#c0c0c0"></div><div class="a" style="left:222px;top:478px;width:52px;height:22px;background:#f0f0f0"></div><div class="t" style="left:222px;top:483px;font-size:12px;font-weight:bold"><div style="width:52px;text-align:center">T°</div></div><div class="a" style="left:275px;top:478px;width:79px;height:22px;background:#fff"></div><div class="a" style="left:222px;top:500px;width:52px;height:1px;background:#6e6e6e"></div><div class="a" style="left:275px;top:500px;width:79px;height:1px;background:#c0c0c0"></div><div class="a" style="left:222px;top:501px;width:52px;height:22px;background:#f0f0f0"></div><div class="t" style="left:222px;top:506px;font-size:12px;font-weight:bold"><div style="width:52px;text-align:center">X</div></div><div class="a" style="left:275px;top:501px;width:79px;height:22px;background:#e0e0e0"></div><div class="a" style="left:222px;top:523px;width:52px;height:1px;background:#6e6e6e"></div><div class="a" style="left:275px;top:523px;width:79px;height:1px;background:#c0c0c0"></div><div class="a" style="left:222px;top:524px;width:52px;height:22px;background:#f0f0f0"></div><div class="t" style="left:222px;top:529px;font-size:12px;font-weight:bold"><div style="width:52px;text-align:center">Y</div></div><div class="a" style="left:275px;top:524px;width:79px;height:22px;background:#e0e0e0"></div><div class="a" style="left:222px;top:546px;width:52px;height:1px;background:#6e6e6e"></div><div class="a" style="left:275px;top:546px;width:79px;height:1px;background:#c0c0c0"></div><div class="a" style="left:222px;top:547px;width:52px;height:22px;background:#f0f0f0"></div><div class="t" style="left:222px;top:552px;font-size:12px;font-weight:bold"><div style="width:52px;text-align:center">Z</div></div><div class="a" style="left:275px;top:547px;width:79px;height:22px;background:#e0e0e0"></div><div class="a" style="left:222px;top:569px;width:52px;height:1px;background:#6e6e6e"></div><div class="a" style="left:275px;top:569px;width:79px;height:1px;background:#c0c0c0"></div><div class="a" style="left:222px;top:570px;width:52px;height:22px;background:#f0f0f0"></div><div class="t" style="left:222px;top:575px;font-size:12px;font-weight:bold"><div style="width:52px;text-align:center">R</div></div><div class="a" style="left:275px;top:570px;width:79px;height:22px;background:#fff"></div><div class="a" style="left:222px;top:592px;width:52px;height:1px;background:#6e6e6e"></div><div class="a" style="left:275px;top:592px;width:79px;height:1px;background:#c0c0c0"></div><div class="a" style="left:222px;top:593px;width:52px;height:22px;background:#f0f0f0"></div><div class="t" style="left:222px;top:598px;font-size:12px;font-weight:bold"><div style="width:52px;text-align:center">G</div></div><div class="a" style="left:275px;top:593px;width:79px;height:22px;background:#fff"></div><div class="a" style="left:222px;top:615px;width:52px;height:1px;background:#6e6e6e"></div><div class="a" style="left:275px;top:615px;width:79px;height:1px;background:#c0c0c0"></div><div class="a" style="left:222px;top:616px;width:52px;height:22px;background:#f0f0f0"></div><div class="t" style="left:222px;top:621px;font-size:12px;font-weight:bold"><div style="width:52px;text-align:center">B</div></div><div class="a" style="left:275px;top:616px;width:79px;height:22px;background:#fff"></div><div class="a" style="left:222px;top:638px;width:52px;height:1px;background:#6e6e6e"></div><div class="a" style="left:275px;top:638px;width:79px;height:1px;background:#c0c0c0"></div><div class="a" style="left:222px;top:639px;width:52px;height:22px;background:#f0f0f0"></div><div class="t" style="left:222px;top:644px;font-size:12px;font-weight:bold"><div style="width:52px;text-align:center">x</div></div><div class="a" style="left:275px;top:639px;width:79px;height:22px;background:#e0e0e0"></div><div class="a" style="left:222px;top:661px;width:52px;height:1px;background:#6e6e6e"></div><div class="a" style="left:275px;top:661px;width:79px;height:1px;background:#c0c0c0"></div><div class="a" style="left:222px;top:662px;width:52px;height:22px;background:#f0f0f0"></div><div class="t" style="left:222px;top:667px;font-size:12px;font-weight:bold"><div style="width:52px;text-align:center">y</div></div><div class="a" style="left:275px;top:662px;width:79px;height:22px;background:#e0e0e0"></div><div class="a" style="left:222px;top:684px;width:52px;height:1px;background:#6e6e6e"></div><div class="a" style="left:275px;top:684px;width:79px;height:1px;background:#c0c0c0"></div><div class="a" style="left:222px;top:685px;width:52px;height:22px;background:#f0f0f0"></div><div class="t" style="left:222px;top:690px;font-size:12px;font-weight:bold"><div style="width:52px;text-align:center">Y</div></div><div class="a" style="left:275px;top:685px;width:79px;height:22px;background:#e0e0e0"></div><div class="a" style="left:222px;top:707px;width:52px;height:1px;background:#6e6e6e"></div><div class="a" style="left:275px;top:707px;width:79px;height:1px;background:#c0c0c0"></div><div class="a" style="left:222px;top:708px;width:52px;height:22px;background:#f0f0f0"></div><div class="t" style="left:222px;top:713px;font-size:12px;font-weight:bold"><div style="width:52px;text-align:center">x</div></div><div class="a" style="left:275px;top:708px;width:79px;height:22px;background:#fff"></div><div class="a" style="left:222px;top:730px;width:52px;height:1px;background:#6e6e6e"></div><div class="a" style="left:275px;top:730px;width:79px;height:1px;background:#c0c0c0"></div><div class="a" style="left:222px;top:731px;width:52px;height:22px;background:#f0f0f0"></div><div class="t" style="left:222px;top:736px;font-size:12px;font-weight:bold"><div style="width:52px;text-align:center">y</div></div><div class="a" style="left:275px;top:731px;width:79px;height:22px;background:#fff"></div><div class="a" style="left:222px;top:753px;width:52px;height:1px;background:#6e6e6e"></div><div class="a" style="left:275px;top:753px;width:79px;height:1px;background:#c0c0c0"></div><div class="a" style="left:222px;top:754px;width:52px;height:22px;background:#f0f0f0"></div><div class="t" style="left:222px;top:759px;font-size:12px;font-weight:bold"><div style="width:52px;text-align:center">z</div></div><div class="a" style="left:275px;top:754px;width:79px;height:22px;background:#fff"></div><div class="a" style="left:222px;top:776px;width:52px;height:1px;background:#6e6e6e"></div><div class="a" style="left:275px;top:776px;width:79px;height:1px;background:#c0c0c0"></div><div class="a" style="left:222px;top:777px;width:52px;height:22px;background:#f0f0f0"></div><div class="t" style="left:222px;top:782px;font-size:12px;font-weight:bold"><div style="width:52px;text-align:center">L</div></div><div class="a" style="left:275px;top:777px;width:79px;height:22px;background:#e0e0e0"></div><div class="a" style="left:222px;top:799px;width:52px;height:1px;background:#6e6e6e"></div><div class="a" style="left:275px;top:799px;width:79px;height:1px;background:#c0c0c0"></div><div class="a" style="left:222px;top:800px;width:52px;height:22px;background:#f0f0f0"></div><div class="t" style="left:222px;top:805px;font-size:12px;font-weight:bold"><div style="width:52px;text-align:center">a</div></div><div class="a" style="left:275px;top:800px;width:79px;height:22px;background:#e0e0e0"></div><div class="a" style="left:222px;top:822px;width:52px;height:1px;background:#6e6e6e"></div><div class="a" style="left:275px;top:822px;width:79px;height:1px;background:#c0c0c0"></div><div class="a" style="left:222px;top:823px;width:52px;height:22px;background:#f0f0f0"></div><div class="t" style="left:222px;top:828px;font-size:12px;font-weight:bold"><div style="width:52px;text-align:center">b</div></div><div class="a" style="left:275px;top:823px;width:79px;height:22px;background:#e0e0e0"></div><div class="a" style="left:222px;top:845px;width:52px;height:1px;background:#6e6e6e"></div><div class="a" style="left:275px;top:845px;width:79px;height:1px;background:#c0c0c0"></div><div class="a" style="left:222px;top:846px;width:52px;height:22px;background:#f0f0f0"></div><div class="t" style="left:222px;top:851px;font-size:12px;font-weight:bold"><div style="width:52px;text-align:center">L</div></div><div class="a" style="left:275px;top:846px;width:79px;height:22px;background:#fff"></div><div class="a" style="left:222px;top:868px;width:52px;height:1px;background:#6e6e6e"></div><div class="a" style="left:275px;top:868px;width:79px;height:1px;background:#c0c0c0"></div><div class="a" style="left:222px;top:869px;width:52px;height:22px;background:#f0f0f0"></div><div class="t" style="left:222px;top:874px;font-size:12px;font-weight:bold"><div style="width:52px;text-align:center">C</div></div><div class="a" style="left:275px;top:869px;width:79px;height:22px;background:#fff"></div><div class="a" style="left:222px;top:891px;width:52px;height:1px;background:#6e6e6e"></div><div class="a" style="left:275px;top:891px;width:79px;height:1px;background:#c0c0c0"></div><div class="a" style="left:222px;top:892px;width:52px;height:22px;background:#f0f0f0"></div><div class="t" style="left:222px;top:897px;font-size:12px;font-weight:bold"><div style="width:52px;text-align:center">H</div></div><div class="a" style="left:275px;top:892px;width:79px;height:22px;background:#fff"></div><div class="a" style="left:222px;top:914px;width:52px;height:1px;background:#6e6e6e"></div><div class="a" style="left:275px;top:914px;width:79px;height:1px;background:#c0c0c0"></div><div class="a" style="left:222px;top:915px;width:52px;height:22px;background:#f0f0f0"></div><div class="t" style="left:222px;top:920px;font-size:12px;font-weight:bold"><div style="width:52px;text-align:center">L</div></div><div class="a" style="left:275px;top:915px;width:79px;height:22px;background:#e0e0e0"></div><div class="a" style="left:222px;top:937px;width:52px;height:1px;background:#6e6e6e"></div><div class="a" style="left:275px;top:937px;width:79px;height:1px;background:#c0c0c0"></div><div class="a" style="left:222px;top:938px;width:52px;height:22px;background:#f0f0f0"></div><div class="t" style="left:222px;top:943px;font-size:12px;font-weight:bold"><div style="width:52px;text-align:center">M</div></div><div class="a" style="left:275px;top:938px;width:79px;height:22px;background:#e0e0e0"></div><div class="a" style="left:222px;top:960px;width:52px;height:1px;background:#6e6e6e"></div><div class="a" style="left:275px;top:960px;width:79px;height:1px;background:#c0c0c0"></div><div class="a" style="left:222px;top:961px;width:52px;height:21px;background:#f0f0f0"></div><div class="t" style="left:222px;top:966px;font-size:12px;font-weight:bold"><div style="width:52px;text-align:center">S</div></div><div class="a" style="left:275px;top:961px;width:79px;height:21px;background:#e0e0e0"></div><div class="a" style="left:222px;top:982px;width:52px;height:1px;background:#6e6e6e"></div><div class="a" style="left:275px;top:982px;width:79px;height:1px;background:#c0c0c0"></div><div class="a" style="left:274px;top:433px;width:1px;height:551px;background:#6e6e6e"></div><div class="a" style="left:222px;top:984px;width:132px;height:23px;background:#a0a0a0"></div><div class="a" style="left:355px;top:433px;width:17px;height:574px;background:#ececec;border-left:1px solid #fff"></div><div class="a" style="left:363px;top:449px;width:2px;height:17px;background:#808080"></div><div class="a" style="left:391px;top:387px;width:1504px;height:629px;border:1px solid #6e6e6e;border-right-width:2px;border-bottom-width:2px;background:#f0f0f0"></div><div class="a" style="left:392px;top:388px;width:1501px;height:18px;background:linear-gradient(90deg,#e1e8f3,#edf2f9);border-bottom:1px solid #8c8c8c;border-radius:5px 5px 0 0;box-shadow:-1px -1px 0 #6e6e6e;"></div><div class="t" style="left:398px;top:392px;font-size:12px;font-weight:bold;color:#3f3636;letter-spacing:0.8px">Information</div><div class="a" style="left:392px;top:406px;width:1501px;height:608px;background:#ebebeb"></div><div class="a" style="left:396px;top:409px;width:302px;height:23px;background:#fff;border-top:2px solid #6e6e6e;border-left:2px solid #6e6e6e;border-right:1px solid #e3e3e3;border-bottom:1px solid #e3e3e3"></div><div class="a" style="left:400px;top:413px;width:279px;height:15px;background:#0078d7"></div><div class="t" style="left:401px;top:414px;font-size:13px;color:#fff;letter-spacing:0.6px">Target - CIE</div><div class="a" style="left:679px;top:411px;width:18px;height:20px;background:#f0f0f0;border-right:2px solid #808080;border-bottom:2px solid #808080;border-left:1px solid #fff;border-top:1px solid #fff"></div><svg class="a" style="left:683px;top:418px" width="9" height="5"><path d="M0 0h9l-4.5 5z" fill="#000"/></svg><div class="a" style="left:398px;top:439px;width:748px;height:570px;background:conic-gradient(from 0deg at 50% 50%, #44ff00 0deg, #a8e000 30deg, #ffc400 50deg, #ff9800 60deg, #ff5000 72deg, #ff0800 88deg, #ff0010 100deg, #ff0080 125deg, #e800a0 140deg, #9000c0 180deg, #3000f0 215deg, #0000ff 230deg, #0050c8 255deg, #00a0a0 280deg, #00d890 300deg, #00ff80 318deg, #20ff40 340deg, #44ff00 360deg);border:1px solid #000;border-bottom-color:#fff;"></div><div class="a" style="left:510px;top:524px;width:524px;height:400px;background:#000;border:1px solid #fff;border-radius:10px"></div><svg class="a" style="left:398px;top:439px" width="748" height="570"><g fill="none" stroke="#fff" stroke-width="1" stroke-dasharray="3 3"><line x1="374.5" y1="58" x2="374.5" y2="512"/><line x1="79" y1="284.5" x2="669" y2="284.5"/><ellipse cx="374.5" cy="285" rx="147" ry="113.5"/></g></svg><div class="a" style="left:1146px;top:439px;width:748px;height:570px;border-top:2px solid #8c8c8c;border-left:2px solid #8c8c8c;border-right:2px solid #fff;border-bottom:2px solid #fff;background:#ebebeb"></div><div class="a" style="left:1148px;top:441px;width:743px;height:565px;border-top:1px solid #c8c8c8;border-left:1px solid #c8c8c8;background:#02080a"></div><div class="a" style="left:1150px;top:443px;width:740px;height:562px;clip-path:path('M192.0 524.0 C190.6 523.0 187.4 521.8 183.6 518.2 C179.8 514.7 176.0 510.9 169.4 502.7 C162.8 494.5 151.5 482.4 144.0 468.8 C136.5 455.1 132.1 440.6 124.3 420.8 C116.5 401.0 104.5 368.8 97.4 350.2 C90.3 331.6 86.6 324.7 81.9 309.2 C77.2 293.7 72.1 274.0 69.2 257.0 C66.3 240.0 65.3 218.7 64.5 207.0 C63.7 195.3 64.3 194.2 64.3 187.0 C64.3 179.8 64.2 171.5 64.5 163.7 C64.8 155.9 65.4 145.9 65.8 140.3 C66.2 134.7 66.3 134.1 66.9 130.0 C67.5 125.9 68.4 120.2 69.4 115.7 C70.4 111.2 70.5 107.9 72.7 102.7 C74.9 97.5 79.1 89.1 82.4 84.6 C85.8 80.1 89.1 78.1 92.8 75.5 C96.5 72.9 100.3 71.0 104.4 69.0 C108.5 66.9 113.5 64.5 117.4 63.2 C121.3 61.9 123.9 61.6 127.8 61.3 C131.7 61.0 136.4 60.9 140.7 61.3 C145.0 61.7 149.4 62.8 153.7 63.9 C158.0 65.0 160.7 65.8 166.7 67.7 C172.8 69.6 182.3 72.6 190.0 75.5 C197.7 78.4 201.0 79.3 212.6 85.2 C224.1 91.1 243.3 101.7 259.3 111.0 C275.3 120.3 293.4 131.2 308.5 140.9 C323.6 150.6 343.1 164.3 350.0 169.0 L655.3 377.6 Z');background:radial-gradient(circle 75px at 272px 352px, rgba(255,255,255,0.38), rgba(255,255,255,0.12) 60%, rgba(255,255,255,0) 100%),conic-gradient(from 0deg at 318px 355px, #20c800 0deg, #58c800 10deg, #90c000 20deg, #b0b400 35deg, #c09a00 50deg, #c87010 62deg, #d04018 76deg, #d00838 92deg, #d0006a 110deg, #c400a8 150deg, #8a00d0 200deg, #4010e0 222deg, #0060d0 232deg, #00a8c0 250deg, #00c4a8 275deg, #00c89a 300deg, #00c878 330deg, #10c840 350deg, #2cc800 360deg)"></div><svg class="a" style="left:1150px;top:443px" width="740" height="562"><g stroke="#404040" stroke-width="1"><line x1="61.5" y1="0" x2="61.5" y2="562"/><line x1="143.5" y1="0" x2="143.5" y2="562"/><line x1="226.5" y1="0" x2="226.5" y2="562"/><line x1="308.5" y1="0" x2="308.5" y2="562"/><line x1="390.5" y1="0" x2="390.5" y2="562"/><line x1="473.5" y1="0" x2="473.5" y2="562"/><line x1="555.5" y1="0" x2="555.5" y2="562"/><line x1="637.5" y1="0" x2="637.5" y2="562"/><line x1="0" y1="476.5" x2="740" y2="476.5"/><line x1="0" y1="420.5" x2="740" y2="420.5"/><line x1="0" y1="364.5" x2="740" y2="364.5"/><line x1="0" y1="308.5" x2="740" y2="308.5"/><line x1="0" y1="252.5" x2="740" y2="252.5"/><line x1="0" y1="196.5" x2="740" y2="196.5"/><line x1="0" y1="140.5" x2="740" y2="140.5"/><line x1="0" y1="84.5" x2="740" y2="84.5"/><line x1="0" y1="28.5" x2="740" y2="28.5"/></g></svg><div class="a" style="left:1150px;top:443px;width:740px;height:562px;clip-path:path('M597.2 351.3 L310.4 191.7 L183.5 500.8 Z');background:radial-gradient(ellipse 135px 120px at 318px 364px, rgba(255,255,255,1), rgba(255,255,255,0.88) 25%, rgba(255,255,255,0.4) 62%, rgba(255,255,255,0) 100%),conic-gradient(from 0deg at 318px 354px, #70ff40 0deg, #b0ff40 20deg, #f8ff50 45deg, #ffb850 65deg, #ff7050 80deg, #ff4058 95deg, #ff4898 118deg, #ff58d8 160deg, #c068ff 195deg, #5068ff 222deg, #58b8ff 260deg, #70ffe0 300deg, #60ff90 340deg, #70ff40 360deg)"></div><svg class="a" style="left:1150px;top:443px" width="740" height="562" viewBox="1150 443 740 562"><defs><radialGradient id="bg" cx="0.4" cy="0.35" r="0.7"><stop offset="0" stop-color="#fff" stop-opacity="0.9"/><stop offset="0.3" stop-color="#30e030"/><stop offset="1" stop-color="#006000"/></radialGradient><radialGradient id="by" cx="0.4" cy="0.35" r="0.7"><stop offset="0" stop-color="#fff" stop-opacity="0.9"/><stop offset="0.3" stop-color="#f0f0a0"/><stop offset="1" stop-color="#a0a040"/></radialGradient><radialGradient id="br" cx="0.4" cy="0.35" r="0.7"><stop offset="0" stop-color="#fff" stop-opacity="0.9"/><stop offset="0.3" stop-color="#f02020"/><stop offset="1" stop-color="#900000"/></radialGradient><radialGradient id="bc" cx="0.4" cy="0.35" r="0.7"><stop offset="0" stop-color="#fff" stop-opacity="0.9"/><stop offset="0.3" stop-color="#90f4f4"/><stop offset="1" stop-color="#50b0b0"/></radialGradient><radialGradient id="bb" cx="0.4" cy="0.35" r="0.7"><stop offset="0" stop-color="#fff" stop-opacity="0.9"/><stop offset="0.3" stop-color="#3030f0"/><stop offset="1" stop-color="#101080"/></radialGradient><radialGradient id="bm" cx="0.4" cy="0.35" r="0.7"><stop offset="0" stop-color="#fff" stop-opacity="0.9"/><stop offset="0.3" stop-color="#f020f0"/><stop offset="1" stop-color="#900090"/></radialGradient><radialGradient id="bw" cx="0.4" cy="0.35" r="0.7"><stop offset="0" stop-color="#fff" stop-opacity="0.9"/><stop offset="0.3" stop-color="#ffffff"/><stop offset="1" stop-color="#d0d0d0"/></radialGradient><filter id="sh" x="-50%" y="-50%" width="200%" height="200%"><feGaussianBlur stdDeviation="1.2"/></filter></defs><path d="M1342.0 967.0 C1340.6 966.0 1337.4 964.8 1333.6 961.2 C1329.8 957.7 1326.0 953.9 1319.4 945.7 C1312.8 937.5 1301.5 925.4 1294.0 911.8 C1286.5 898.1 1282.1 883.6 1274.3 863.8 C1266.5 844.0 1254.5 811.8 1247.4 793.2 C1240.3 774.6 1236.6 767.7 1231.9 752.2 C1227.2 736.7 1222.1 717.0 1219.2 700.0 C1216.3 683.0 1215.3 661.7 1214.5 650.0 C1213.7 638.3 1214.3 637.2 1214.3 630.0 C1214.3 622.8 1214.2 614.5 1214.5 606.7 C1214.8 598.9 1215.4 588.9 1215.8 583.3 C1216.2 577.7 1216.3 577.1 1216.9 573.0 C1217.5 568.9 1218.4 563.2 1219.4 558.7 C1220.4 554.2 1220.5 550.9 1222.7 545.7 C1224.9 540.5 1229.1 532.1 1232.4 527.6 C1235.8 523.1 1239.1 521.1 1242.8 518.5 C1246.5 515.9 1250.3 514.0 1254.4 512.0 C1258.5 509.9 1263.5 507.5 1267.4 506.2 C1271.3 504.9 1273.9 504.6 1277.8 504.3 C1281.7 504.0 1286.4 503.9 1290.7 504.3 C1295.0 504.7 1299.4 505.8 1303.7 506.9 C1308.0 508.0 1310.7 508.8 1316.7 510.7 C1322.8 512.6 1332.3 515.6 1340.0 518.5 C1347.7 521.4 1351.0 522.3 1362.6 528.2 C1374.1 534.1 1393.3 544.7 1409.3 554.0 C1425.3 563.3 1443.4 574.2 1458.5 583.9 C1473.6 593.6 1493.1 607.3 1500.0 612.0 L1805.3 820.6 Z" fill="none" stroke="#e8a010" stroke-width="1.2"/><line x1="1150" y1="791.5" x2="1890" y2="791.5" stroke="#d0d0d0" stroke-width="1" stroke-dasharray="4 3"/><line x1="1468.5" y1="443" x2="1468.5" y2="1005" stroke="#d0d0d0" stroke-width="1" stroke-dasharray="4 3"/><line x1="1480" y1="798.5" x2="1750" y2="798.5" stroke="#303030" stroke-width="1" stroke-dasharray="4 3"/><defs><linearGradient id="lgr" gradientUnits="userSpaceOnUse" x1="1458.44" y1="639.4399999999999" x2="1738.362" y2="790.8019999999999"><stop offset="0" stop-color="#007a00"/><stop offset="0.3" stop-color="#007a00"/><stop offset="0.31" stop-color="#7a6a00"/><stop offset="1" stop-color="#8a5a00"/></linearGradient><linearGradient id="lrb" gradientUnits="userSpaceOnUse" x1="1738.362" y1="790.8019999999999" x2="1334.945" y2="942.164"><stop offset="0" stop-color="#a00000"/><stop offset="0.5" stop-color="#a00008"/><stop offset="0.51" stop-color="#7000a8"/><stop offset="1" stop-color="#3000c0"/></linearGradient></defs><line x1="1458.44" y1="639.4399999999999" x2="1738.362" y2="790.8019999999999" stroke="url(#lgr)" stroke-width="3"/><line x1="1738.362" y1="790.8019999999999" x2="1334.945" y2="942.164" stroke="url(#lrb)" stroke-width="3"/><line x1="1334.945" y1="942.164" x2="1458.44" y2="639.4399999999999" stroke="#10108a" stroke-width="2.5"/><polygon points="1747.2,794.3 1460.4,634.7 1333.5,943.8" fill="none" stroke="#fff" stroke-width="3.5" stroke-linejoin="bevel"/><line x1="1304" y1="479" x2="1288.7" y2="503.5" stroke="#c8c8c8" stroke-width="0.8"/><text x="1304" y="487" font-family="Liberation Serif" font-size="11" fill="#e0e0e0" letter-spacing="-0.3">520 nm</text><line x1="1427.4" y1="532" x2="1410.6" y2="555.4" stroke="#c8c8c8" stroke-width="0.8"/><text x="1427" y="538" font-family="Liberation Serif" font-size="11" fill="#e0e0e0" letter-spacing="-0.3">540 nm</text><line x1="1199" y1="650" x2="1214.8" y2="644.8" stroke="#c8c8c8" stroke-width="0.8"/><text x="1172" y="660" font-family="Liberation Serif" font-size="11" fill="#e0e0e0" letter-spacing="-0.3">500 nm</text><line x1="1541" y1="605.6" x2="1523.6" y2="629" stroke="#c8c8c8" stroke-width="0.8"/><text x="1541" y="612" font-family="Liberation Serif" font-size="11" fill="#e0e0e0" letter-spacing="-0.3">560 nm</text><line x1="1621" y1="659" x2="1603.9" y2="682.8" stroke="#c8c8c8" stroke-width="0.8"/><text x="1621" y="665" font-family="Liberation Serif" font-size="11" fill="#e0e0e0" letter-spacing="-0.3">580 nm</text><line x1="1674.7" y1="697" x2="1659" y2="720.5" stroke="#c8c8c8" stroke-width="0.8"/><text x="1675" y="703" font-family="Liberation Serif" font-size="11" fill="#e0e0e0" letter-spacing="-0.3">600 nm</text><line x1="1726.6" y1="732.5" x2="1710.9" y2="755" stroke="#c8c8c8" stroke-width="0.8"/><text x="1727" y="738" font-family="Liberation Serif" font-size="11" fill="#e0e0e0" letter-spacing="-0.3">620 nm</text><line x1="1783.3" y1="771" x2="1767.5" y2="793" stroke="#c8c8c8" stroke-width="0.8"/><text x="1783" y="777" font-family="Liberation Serif" font-size="11" fill="#e0e0e0" letter-spacing="-0.3">640 nm</text><line x1="1807" y1="786.6" x2="1789.6" y2="810.2" stroke="#c8c8c8" stroke-width="0.8"/><text x="1807" y="794" font-family="Liberation Serif" font-size="11" fill="#e0e0e0" letter-spacing="-0.3">660 nm</text><line x1="1816" y1="794.5" x2="1802" y2="818" stroke="#c8c8c8" stroke-width="0.8"/><text x="1816" y="801" font-family="Liberation Serif" font-size="11" fill="#e0e0e0" letter-spacing="-0.3">680 nm</text><line x1="1263" y1="883" x2="1277" y2="878" stroke="#c8c8c8" stroke-width="0.8"/><text x="1235" y="893" font-family="Liberation Serif" font-size="11" fill="#e0e0e0" letter-spacing="-0.3">480 nm</text><line x1="1298.3" y1="947" x2="1313.8" y2="941.5" stroke="#c8c8c8" stroke-width="0.8"/><text x="1271" y="955" font-family="Liberation Serif" font-size="11" fill="#e0e0e0" letter-spacing="-0.3">460 nm</text><line x1="1311" y1="961" x2="1325" y2="955.6" stroke="#c8c8c8" stroke-width="0.8"/><text x="1283" y="971" font-family="Liberation Serif" font-size="11" fill="#e0e0e0" letter-spacing="-0.3">440 nm</text><line x1="1318" y1="968.3" x2="1330.7" y2="964" stroke="#c8c8c8" stroke-width="0.8"/><text x="1290" y="979" font-family="Liberation Serif" font-size="11" fill="#e0e0e0" letter-spacing="-0.3">420 nm</text><text x="1294.8" y="1002" font-family="Liberation Serif" font-size="14" fill="#f0f0f0">0.1</text><text x="1377.1" y="1002" font-family="Liberation Serif" font-size="14" fill="#f0f0f0">0.2</text><text x="1459.4" y="1002" font-family="Liberation Serif" font-size="14" fill="#f0f0f0">0.3</text><text x="1541.8" y="1002" font-family="Liberation Serif" font-size="14" fill="#f0f0f0">0.4</text><text x="1624.1" y="1002" font-family="Liberation Serif" font-size="14" fill="#f0f0f0">0.5</text><text x="1706.4" y="1002" font-family="Liberation Serif" font-size="14" fill="#f0f0f0">0.6</text><text x="1788.8" y="1002" font-family="Liberation Serif" font-size="14" fill="#f0f0f0">0.7</text><text x="1152" y="915.7" font-family="Liberation Serif" font-size="14" fill="#f0f0f0">0.1</text><text x="1152" y="859.7" font-family="Liberation Serif" font-size="14" fill="#f0f0f0">0.2</text><text x="1152" y="803.6" font-family="Liberation Serif" font-size="14" fill="#f0f0f0">0.3</text><text x="1152" y="747.6" font-family="Liberation Serif" font-size="14" fill="#f0f0f0">0.4</text><text x="1152" y="691.5" font-family="Liberation Serif" font-size="14" fill="#f0f0f0">0.5</text><text x="1152" y="635.4" font-family="Liberation Serif" font-size="14" fill="#f0f0f0">0.6</text><text x="1152" y="579.4" font-family="Liberation Serif" font-size="14" fill="#f0f0f0">0.7</text><text x="1152" y="523.3" font-family="Liberation Serif" font-size="14" fill="#f0f0f0">0.8</text><text x="1725" y="945" font-family="Liberation Sans" font-weight="bold" font-size="16" fill="#505558">hcfr.sourceforge.net</text><path d="M1479 790 Q1510 770 1526 762 Q1550 750 1573 745.5 L1598 742" fill="none" stroke="#000" stroke-width="1.2"/><circle cx="1526" cy="762" r="2.5" fill="#fff" stroke="#000" stroke-width="0.8"/><circle cx="1572.6" cy="745.9" r="2.5" fill="#fff" stroke="#000" stroke-width="0.8"/><circle cx="1591" cy="743" r="2.5" fill="#fff" stroke="#000" stroke-width="0.8"/><circle cx="1578.5" cy="747.4" r="2.6" fill="#20d020" stroke="#000" stroke-width="0.5"/><circle cx="1497.8" cy="778.5" r="2.6" fill="#20d020" stroke="#000" stroke-width="0.5"/><text x="1547" y="740" font-family="Liberation Serif" font-size="13" fill="#000">3000</text><text x="1589" y="739" font-family="Liberation Serif" font-size="13" fill="#000">2700</text><text x="1577" y="763" font-family="Liberation Serif" font-size="13" fill="#000">A</text><text x="1506" y="794" font-family="Liberation Serif" font-size="12" fill="#203080">B</text><text x="1440" y="798" font-family="Liberation Serif" font-size="12" fill="#202020">D65</text><rect x="1451.5" y="630.7" width="13" height="13" fill="#50e020"/><path d="M1451.5 643.7V630.7H1464.5" fill="none" stroke="#203090" stroke-width="1.5"/><path d="M1464.5 630.7V643.7H1451.5" fill="none" stroke="#d02040" stroke-width="1.5"/><rect x="1452.3" y="647.3" width="13" height="13" fill="#50e020"/><path d="M1452.3 660.3V647.3H1465.3" fill="none" stroke="#203090" stroke-width="1.5"/><path d="M1465.3 647.3V660.3H1452.3" fill="none" stroke="#d02040" stroke-width="1.5"/><rect x="1453.2" y="664.8" width="13" height="13" fill="#50e020"/><path d="M1453.2 677.8V664.8H1466.2" fill="none" stroke="#203090" stroke-width="1.5"/><path d="M1466.2 664.8V677.8H1453.2" fill="none" stroke="#d02040" stroke-width="1.5"/><rect x="1455.7" y="679.8" width="13" height="13" fill="#50e020"/><path d="M1455.7 692.8V679.8H1468.7" fill="none" stroke="#203090" stroke-width="1.5"/><path d="M1468.7 679.8V692.8H1455.7" fill="none" stroke="#d02040" stroke-width="1.5"/><rect x="1454.8" y="698.2" width="13" height="13" fill="#50e020"/><path d="M1454.8 711.2V698.2H1467.8" fill="none" stroke="#203090" stroke-width="1.5"/><path d="M1467.8 698.2V711.2H1454.8" fill="none" stroke="#d02040" stroke-width="1.5"/><rect x="1457.3" y="713.2" width="13" height="13" fill="#50e020"/><path d="M1457.3 726.2V713.2H1470.3" fill="none" stroke="#203090" stroke-width="1.5"/><path d="M1470.3 713.2V726.2H1457.3" fill="none" stroke="#d02040" stroke-width="1.5"/><rect x="1458.2" y="729.8" width="13" height="13" fill="#50e020"/><path d="M1458.2 742.8V729.8H1471.2" fill="none" stroke="#203090" stroke-width="1.5"/><path d="M1471.2 729.8V742.8H1458.2" fill="none" stroke="#d02040" stroke-width="1.5"/><rect x="1457.3" y="746.5" width="13" height="13" fill="#50e020"/><path d="M1457.3 759.5V746.5H1470.3" fill="none" stroke="#203090" stroke-width="1.5"/><path d="M1470.3 746.5V759.5H1457.3" fill="none" stroke="#d02040" stroke-width="1.5"/><rect x="1458.2" y="761.5" width="13" height="13" fill="#50e020"/><path d="M1458.2 774.5V761.5H1471.2" fill="none" stroke="#203090" stroke-width="1.5"/><path d="M1471.2 761.5V774.5H1458.2" fill="none" stroke="#d02040" stroke-width="1.5"/><rect x="1458.2" y="778.2" width="13" height="13" fill="#50e020"/><path d="M1458.2 791.2V778.2H1471.2" fill="none" stroke="#203090" stroke-width="1.5"/><path d="M1471.2 778.2V791.2H1458.2" fill="none" stroke="#d02040" stroke-width="1.5"/><rect x="1467.3" y="778.4" width="13" height="13" fill="#ffe020"/><path d="M1467.3 791.4V778.4H1480.3" fill="none" stroke="#1a2a80" stroke-width="1.5"/><path d="M1480.3 778.4V791.4H1467.3" fill="none" stroke="#d02040" stroke-width="1.5"/><rect x="1476.9" y="767.3" width="13" height="13" fill="#ffe020"/><path d="M1476.9 780.3V767.3H1489.9" fill="none" stroke="#1a2a80" stroke-width="1.5"/><path d="M1489.9 767.3V780.3H1476.9" fill="none" stroke="#d02040" stroke-width="1.5"/><rect x="1487.7" y="756.2" width="13" height="13" fill="#ffe020"/><path d="M1487.7 769.2V756.2H1500.7" fill="none" stroke="#1a2a80" stroke-width="1.5"/><path d="M1500.7 756.2V769.2H1487.7" fill="none" stroke="#d02040" stroke-width="1.5"/><rect x="1496.9" y="747.3" width="13" height="13" fill="#ffe020"/><path d="M1496.9 760.3V747.3H1509.9" fill="none" stroke="#1a2a80" stroke-width="1.5"/><path d="M1509.9 747.3V760.3H1496.9" fill="none" stroke="#d02040" stroke-width="1.5"/><rect x="1506.5" y="735.4" width="13" height="13" fill="#ffe020"/><path d="M1506.5 748.4V735.4H1519.5" fill="none" stroke="#1a2a80" stroke-width="1.5"/><path d="M1519.5 735.4V748.4H1506.5" fill="none" stroke="#d02040" stroke-width="1.5"/><rect x="1516.9" y="724.3" width="13" height="13" fill="#ffe020"/><path d="M1516.9 737.3V724.3H1529.9" fill="none" stroke="#1a2a80" stroke-width="1.5"/><path d="M1529.9 724.3V737.3H1516.9" fill="none" stroke="#d02040" stroke-width="1.5"/><rect x="1525.8" y="713.9" width="13" height="13" fill="#ffe020"/><path d="M1525.8 726.9V713.9H1538.8" fill="none" stroke="#1a2a80" stroke-width="1.5"/><path d="M1538.8 713.9V726.9H1525.8" fill="none" stroke="#d02040" stroke-width="1.5"/><rect x="1535.4" y="703.6" width="13" height="13" fill="#ffe020"/><path d="M1535.4 716.6V703.6H1548.4" fill="none" stroke="#1a2a80" stroke-width="1.5"/><path d="M1548.4 703.6V716.6H1535.4" fill="none" stroke="#d02040" stroke-width="1.5"/><rect x="1544.3" y="693.9" width="13" height="13" fill="#ffe020"/><path d="M1544.3 706.9V693.9H1557.3" fill="none" stroke="#1a2a80" stroke-width="1.5"/><path d="M1557.3 693.9V706.9H1544.3" fill="none" stroke="#d02040" stroke-width="1.5"/><rect x="1553.9" y="683.6" width="13" height="13" fill="#ffe020"/><path d="M1553.9 696.6V683.6H1566.9" fill="none" stroke="#1a2a80" stroke-width="1.5"/><path d="M1566.9 683.6V696.6H1553.9" fill="none" stroke="#d02040" stroke-width="1.5"/><rect x="1492.3" y="783.6" width="12" height="12" fill="#fff" fill-opacity="0.35" stroke="#f01818" stroke-width="2.2"/><path d="M1491.3 783.6h14" stroke="#1a2a80" stroke-width="1.4"/><rect x="1521.2" y="783.6" width="12" height="12" fill="#fff" fill-opacity="0.35" stroke="#f01818" stroke-width="2.2"/><path d="M1520.2 783.6h14" stroke="#1a2a80" stroke-width="1.4"/><rect x="1550.0" y="783" width="12" height="12" fill="#fff" fill-opacity="0.35" stroke="#f01818" stroke-width="2.2"/><path d="M1549.0 783h14" stroke="#1a2a80" stroke-width="1.4"/><rect x="1577.5" y="783" width="12" height="12" fill="#fff" fill-opacity="0.35" stroke="#f01818" stroke-width="2.2"/><path d="M1576.5 783h14" stroke="#1a2a80" stroke-width="1.4"/><rect x="1607.0" y="782.8" width="12" height="12" fill="#fff" fill-opacity="0.35" stroke="#f01818" stroke-width="2.2"/><path d="M1606.0 782.8h14" stroke="#1a2a80" stroke-width="1.4"/><rect x="1636.0" y="782.8" width="12" height="12" fill="#fff" fill-opacity="0.35" stroke="#f01818" stroke-width="2.2"/><path d="M1635.0 782.8h14" stroke="#1a2a80" stroke-width="1.4"/><rect x="1662.9" y="782.5" width="12" height="12" fill="#fff" fill-opacity="0.35" stroke="#f01818" stroke-width="2.2"/><path d="M1661.9 782.5h14" stroke="#1a2a80" stroke-width="1.4"/><rect x="1689.7" y="782.5" width="12" height="12" fill="#fff" fill-opacity="0.35" stroke="#f01818" stroke-width="2.2"/><path d="M1688.7 782.5h14" stroke="#1a2a80" stroke-width="1.4"/><rect x="1713.9" y="782.5" width="12" height="12" fill="#fff" fill-opacity="0.35" stroke="#f01818" stroke-width="2.2"/><path d="M1712.9 782.5h14" stroke="#1a2a80" stroke-width="1.4"/><rect x="1740.0" y="782.5" width="12" height="12" fill="#fff" fill-opacity="0.35" stroke="#f01818" stroke-width="2.2"/><path d="M1739.0 782.5h14" stroke="#1a2a80" stroke-width="1.4"/><rect x="1387.2" y="783.5" width="11" height="11" fill="#60f0f0"/><path d="M1387.2 794.5V783.5H1398.2" fill="none" stroke="#1a2a80" stroke-width="1.5"/><path d="M1398.2 783.5V794.5H1387.2" fill="none" stroke="#e02060" stroke-width="1.5"/><rect x="1397.4" y="783.5" width="11" height="11" fill="#60f0f0"/><path d="M1397.4 794.5V783.5H1408.4" fill="none" stroke="#1a2a80" stroke-width="1.5"/><path d="M1408.4 783.5V794.5H1397.4" fill="none" stroke="#e02060" stroke-width="1.5"/><rect x="1404.0" y="783.5" width="11" height="11" fill="#60f0f0"/><path d="M1404.0 794.5V783.5H1415.0" fill="none" stroke="#1a2a80" stroke-width="1.5"/><path d="M1415.0 783.5V794.5H1404.0" fill="none" stroke="#e02060" stroke-width="1.5"/><rect x="1411.2" y="783.5" width="11" height="11" fill="#60f0f0"/><path d="M1411.2 794.5V783.5H1422.2" fill="none" stroke="#1a2a80" stroke-width="1.5"/><path d="M1422.2 783.5V794.5H1411.2" fill="none" stroke="#e02060" stroke-width="1.5"/><rect x="1419.7" y="783.5" width="11" height="11" fill="#60f0f0"/><path d="M1419.7 794.5V783.5H1430.7" fill="none" stroke="#1a2a80" stroke-width="1.5"/><path d="M1430.7 783.5V794.5H1419.7" fill="none" stroke="#e02060" stroke-width="1.5"/><rect x="1426.9" y="783.5" width="11" height="11" fill="#60f0f0"/><path d="M1426.9 794.5V783.5H1437.9" fill="none" stroke="#1a2a80" stroke-width="1.5"/><path d="M1437.9 783.5V794.5H1426.9" fill="none" stroke="#e02060" stroke-width="1.5"/><rect x="1434.1" y="783.5" width="11" height="11" fill="#60f0f0"/><path d="M1434.1 794.5V783.5H1445.1" fill="none" stroke="#1a2a80" stroke-width="1.5"/><path d="M1445.1 783.5V794.5H1434.1" fill="none" stroke="#e02060" stroke-width="1.5"/><rect x="1441.3" y="783.5" width="11" height="11" fill="#60f0f0"/><path d="M1441.3 794.5V783.5H1452.3" fill="none" stroke="#1a2a80" stroke-width="1.5"/><path d="M1452.3 783.5V794.5H1441.3" fill="none" stroke="#e02060" stroke-width="1.5"/><rect x="1448.5" y="783.5" width="11" height="11" fill="#60f0f0"/><path d="M1448.5 794.5V783.5H1459.5" fill="none" stroke="#1a2a80" stroke-width="1.5"/><path d="M1459.5 783.5V794.5H1448.5" fill="none" stroke="#e02060" stroke-width="1.5"/><rect x="1455.8" y="783.5" width="11" height="11" fill="#60f0f0"/><path d="M1455.8 794.5V783.5H1466.8" fill="none" stroke="#1a2a80" stroke-width="1.5"/><path d="M1466.8 783.5V794.5H1455.8" fill="none" stroke="#e02060" stroke-width="1.5"/><rect x="1330.5" y="933.8" width="13" height="13" fill="#3020f0"/><path d="M1330.5 946.8V933.8H1343.5" fill="none" stroke="#1a1a80" stroke-width="1.5"/><path d="M1343.5 933.8V946.8H1330.5" fill="none" stroke="#e02020" stroke-width="1.5"/><rect x="1341.6" y="921.7" width="13" height="13" fill="#3020f0"/><path d="M1341.6 934.7V921.7H1354.6" fill="none" stroke="#1a1a80" stroke-width="1.5"/><path d="M1354.6 921.7V934.7H1341.6" fill="none" stroke="#e02020" stroke-width="1.5"/><rect x="1352.2" y="908.8" width="13" height="13" fill="#3020f0"/><path d="M1352.2 921.8V908.8H1365.2" fill="none" stroke="#1a1a80" stroke-width="1.5"/><path d="M1365.2 908.8V921.8H1352.2" fill="none" stroke="#e02020" stroke-width="1.5"/><rect x="1367.5" y="893.0" width="13" height="13" fill="#3020f0"/><path d="M1367.5 906.0V893.0H1380.5" fill="none" stroke="#1a1a80" stroke-width="1.5"/><path d="M1380.5 893.0V906.0H1367.5" fill="none" stroke="#e02020" stroke-width="1.5"/><rect x="1378.1" y="879.5" width="13" height="13" fill="#3020f0"/><path d="M1378.1 892.5V879.5H1391.1" fill="none" stroke="#1a1a80" stroke-width="1.5"/><path d="M1391.1 879.5V892.5H1378.1" fill="none" stroke="#e02020" stroke-width="1.5"/><rect x="1392.5" y="865.7" width="13" height="13" fill="#3020f0"/><path d="M1392.5 878.7V865.7H1405.5" fill="none" stroke="#1a1a80" stroke-width="1.5"/><path d="M1405.5 865.7V878.7H1392.5" fill="none" stroke="#e02020" stroke-width="1.5"/><rect x="1407.2" y="847.9" width="13" height="13" fill="#3020f0"/><path d="M1407.2 860.9V847.9H1420.2" fill="none" stroke="#1a1a80" stroke-width="1.5"/><path d="M1420.2 847.9V860.9H1407.2" fill="none" stroke="#e02020" stroke-width="1.5"/><rect x="1422.9" y="831.7" width="13" height="13" fill="#3020f0"/><path d="M1422.9 844.7V831.7H1435.9" fill="none" stroke="#1a1a80" stroke-width="1.5"/><path d="M1435.9 831.7V844.7H1422.9" fill="none" stroke="#e02020" stroke-width="1.5"/><rect x="1436.1" y="816.1" width="13" height="13" fill="#3020f0"/><path d="M1436.1 829.1V816.1H1449.1" fill="none" stroke="#1a1a80" stroke-width="1.5"/><path d="M1449.1 816.1V829.1H1436.1" fill="none" stroke="#e02020" stroke-width="1.5"/><rect x="1449.3" y="802.8" width="13" height="13" fill="#3020f0"/><path d="M1449.3 815.8V802.8H1462.3" fill="none" stroke="#1a1a80" stroke-width="1.5"/><path d="M1462.3 802.8V815.8H1449.3" fill="none" stroke="#e02020" stroke-width="1.5"/><rect x="1470.0" y="805.0" width="11" height="11" fill="#f020d0"/><path d="M1470.0 816.0V805.0H1481.0" fill="none" stroke="#1a2a80" stroke-width="1.5"/><path d="M1481.0 805.0V816.0H1470.0" fill="none" stroke="#e02050" stroke-width="1.5"/><rect x="1470.5" y="814.5" width="11" height="11" fill="#f020d0"/><path d="M1470.5 825.5V814.5H1481.5" fill="none" stroke="#1a2a80" stroke-width="1.5"/><path d="M1481.5 814.5V825.5H1470.5" fill="none" stroke="#e02050" stroke-width="1.5"/><rect x="1471.0" y="823.1" width="11" height="11" fill="#f020d0"/><path d="M1471.0 834.1V823.1H1482.0" fill="none" stroke="#1a2a80" stroke-width="1.5"/><path d="M1482.0 823.1V834.1H1471.0" fill="none" stroke="#e02050" stroke-width="1.5"/><rect x="1471.5" y="833.9" width="11" height="11" fill="#f020d0"/><path d="M1471.5 844.9V833.9H1482.5" fill="none" stroke="#1a2a80" stroke-width="1.5"/><path d="M1482.5 833.9V844.9H1471.5" fill="none" stroke="#e02050" stroke-width="1.5"/><rect x="1472.0" y="843.5" width="11" height="11" fill="#f020d0"/><path d="M1472.0 854.5V843.5H1483.0" fill="none" stroke="#1a2a80" stroke-width="1.5"/><path d="M1483.0 843.5V854.5H1472.0" fill="none" stroke="#e02050" stroke-width="1.5"/><rect x="1472.0" y="853.1" width="11" height="11" fill="#f020d0"/><path d="M1472.0 864.1V853.1H1483.0" fill="none" stroke="#1a2a80" stroke-width="1.5"/><path d="M1483.0 853.1V864.1H1472.0" fill="none" stroke="#e02050" stroke-width="1.5"/><rect x="1472.5" y="862.8" width="11" height="11" fill="#f020d0"/><path d="M1472.5 873.8V862.8H1483.5" fill="none" stroke="#1a2a80" stroke-width="1.5"/><path d="M1483.5 862.8V873.8H1472.5" fill="none" stroke="#e02050" stroke-width="1.5"/><rect x="1472.5" y="872.4" width="11" height="11" fill="#f020d0"/><path d="M1472.5 883.4V872.4H1483.5" fill="none" stroke="#1a2a80" stroke-width="1.5"/><path d="M1483.5 872.4V883.4H1472.5" fill="none" stroke="#e02050" stroke-width="1.5"/><rect x="1473.0" y="882.0" width="11" height="11" fill="#f020d0"/><path d="M1473.0 893.0V882.0H1484.0" fill="none" stroke="#1a2a80" stroke-width="1.5"/><path d="M1484.0 882.0V893.0H1473.0" fill="none" stroke="#e02050" stroke-width="1.5"/><rect x="1473.5" y="890.5" width="11" height="11" fill="#f020d0"/><path d="M1473.5 901.5V890.5H1484.5" fill="none" stroke="#1a2a80" stroke-width="1.5"/><path d="M1484.5 890.5V901.5H1473.5" fill="none" stroke="#e02050" stroke-width="1.5"/><rect x="1367.5" y="824.6" width="12" height="12" fill="none" stroke="#c89040" stroke-width="1.6"/><path d="M1367.5 824.6l12 12M1379.5 824.6l-12 12" stroke="#fff" stroke-width="0.6" opacity="0.6"/><rect x="1369.0" y="826.1" width="9" height="9" fill="none" stroke="#607050" stroke-width="0.8"/><rect x="1399.2" y="826.6" width="12" height="12" fill="none" stroke="#c89040" stroke-width="1.6"/><path d="M1399.2 826.6l12 12M1411.2 826.6l-12 12" stroke="#fff" stroke-width="0.6" opacity="0.6"/><rect x="1400.7" y="828.1" width="9" height="9" fill="none" stroke="#607050" stroke-width="0.8"/><rect x="1415" y="834.5" width="12" height="12" fill="none" stroke="#c89040" stroke-width="1.6"/><path d="M1415 834.5l12 12M1427 834.5l-12 12" stroke="#fff" stroke-width="0.6" opacity="0.6"/><rect x="1416.5" y="836.0" width="9" height="9" fill="none" stroke="#607050" stroke-width="0.8"/><rect x="1430.9" y="852.3" width="12" height="12" fill="none" stroke="#c89040" stroke-width="1.6"/><path d="M1430.9 852.3l12 12M1442.9 852.3l-12 12" stroke="#fff" stroke-width="0.6" opacity="0.6"/><rect x="1432.4" y="853.8" width="9" height="9" fill="none" stroke="#607050" stroke-width="0.8"/><rect x="1371.5" y="870" width="12" height="12" fill="none" stroke="#c89040" stroke-width="1.6"/><path d="M1371.5 870l12 12M1383.5 870l-12 12" stroke="#fff" stroke-width="0.6" opacity="0.6"/><rect x="1373.0" y="871.5" width="9" height="9" fill="none" stroke="#607050" stroke-width="0.8"/><rect x="1350.7" y="897.2" width="12" height="12" fill="none" stroke="#c89040" stroke-width="1.6"/><path d="M1350.7 897.2l12 12M1362.7 897.2l-12 12" stroke="#fff" stroke-width="0.6" opacity="0.6"/><rect x="1352.2" y="898.7" width="9" height="9" fill="none" stroke="#607050" stroke-width="0.8"/><rect x="1413" y="767.2" width="12" height="12" fill="none" stroke="#c89040" stroke-width="1.6"/><path d="M1413 767.2l12 12M1425 767.2l-12 12" stroke="#fff" stroke-width="0.6" opacity="0.6"/><rect x="1414.5" y="768.7" width="9" height="9" fill="none" stroke="#607050" stroke-width="0.8"/><rect x="1510" y="834.5" width="12" height="12" fill="none" stroke="#c89040" stroke-width="1.6"/><path d="M1510 834.5l12 12M1522 834.5l-12 12" stroke="#fff" stroke-width="0.6" opacity="0.6"/><rect x="1511.5" y="836.0" width="9" height="9" fill="none" stroke="#607050" stroke-width="0.8"/><rect x="1591.2" y="796.9" width="12" height="12" fill="none" stroke="#c89040" stroke-width="1.6"/><path d="M1591.2 796.9l12 12M1603.2 796.9l-12 12" stroke="#fff" stroke-width="0.6" opacity="0.6"/><rect x="1592.7" y="798.4" width="9" height="9" fill="none" stroke="#607050" stroke-width="0.8"/><rect x="1664.4" y="789" width="12" height="12" fill="none" stroke="#c89040" stroke-width="1.6"/><path d="M1664.4 789l12 12M1676.4 789l-12 12" stroke="#fff" stroke-width="0.6" opacity="0.6"/><rect x="1665.9" y="790.5" width="9" height="9" fill="none" stroke="#607050" stroke-width="0.8"/><rect x="1640.7" y="741.5" width="12" height="12" fill="none" stroke="#c89040" stroke-width="1.6"/><path d="M1640.7 741.5l12 12M1652.7 741.5l-12 12" stroke="#fff" stroke-width="0.6" opacity="0.6"/><rect x="1642.2" y="743.0" width="9" height="9" fill="none" stroke="#607050" stroke-width="0.8"/><rect x="1605" y="721.7" width="12" height="12" fill="none" stroke="#c89040" stroke-width="1.6"/><path d="M1605 721.7l12 12M1617 721.7l-12 12" stroke="#fff" stroke-width="0.6" opacity="0.6"/><rect x="1606.5" y="723.2" width="9" height="9" fill="none" stroke="#607050" stroke-width="0.8"/><rect x="1579.3" y="701" width="12" height="12" fill="none" stroke="#c89040" stroke-width="1.6"/><path d="M1579.3 701l12 12M1591.3 701l-12 12" stroke="#fff" stroke-width="0.6" opacity="0.6"/><rect x="1580.8" y="702.5" width="9" height="9" fill="none" stroke="#607050" stroke-width="0.8"/><rect x="1520" y="771" width="12" height="12" fill="none" stroke="#c89040" stroke-width="1.6"/><path d="M1520 771l12 12M1532 771l-12 12" stroke="#fff" stroke-width="0.6" opacity="0.6"/><rect x="1521.5" y="772.5" width="9" height="9" fill="none" stroke="#607050" stroke-width="0.8"/><rect x="1541.7" y="764.4" width="12" height="12" fill="none" stroke="#c89040" stroke-width="1.6"/><path d="M1541.7 764.4l12 12M1553.7 764.4l-12 12" stroke="#fff" stroke-width="0.6" opacity="0.6"/><rect x="1543.2" y="765.9" width="9" height="9" fill="none" stroke="#607050" stroke-width="0.8"/><rect x="1486.3" y="723.6" width="12" height="12" fill="none" stroke="#c89040" stroke-width="1.6"/><path d="M1486.3 723.6l12 12M1498.3 723.6l-12 12" stroke="#fff" stroke-width="0.6" opacity="0.6"/><rect x="1487.8" y="725.1" width="9" height="9" fill="none" stroke="#607050" stroke-width="0.8"/><rect x="1517.4" y="685.6" width="12" height="12" fill="none" stroke="#c89040" stroke-width="1.6"/><path d="M1517.4 685.6l12 12M1529.4 685.6l-12 12" stroke="#fff" stroke-width="0.6" opacity="0.6"/><rect x="1518.9" y="687.1" width="9" height="9" fill="none" stroke="#607050" stroke-width="0.8"/><circle cx="1392.7" cy="801.5" r="7.3" fill="#000" opacity="0.45" filter="url(#sh)"/><circle cx="1391.7" cy="800" r="6.8" fill="url(#bc)" stroke="#202020" stroke-width="0.9"/><circle cx="1391.7" cy="800" r="0.8" fill="#001040"/><circle cx="1402.9" cy="801.5" r="7.3" fill="#000" opacity="0.45" filter="url(#sh)"/><circle cx="1401.9" cy="800" r="6.8" fill="url(#bc)" stroke="#202020" stroke-width="0.9"/><circle cx="1401.9" cy="800" r="0.8" fill="#001040"/><circle cx="1409.5" cy="801.5" r="7.3" fill="#000" opacity="0.45" filter="url(#sh)"/><circle cx="1408.5" cy="800" r="6.8" fill="url(#bc)" stroke="#202020" stroke-width="0.9"/><circle cx="1408.5" cy="800" r="0.8" fill="#001040"/><circle cx="1416.7" cy="801.5" r="7.3" fill="#000" opacity="0.45" filter="url(#sh)"/><circle cx="1415.7" cy="800" r="6.8" fill="url(#bc)" stroke="#202020" stroke-width="0.9"/><circle cx="1415.7" cy="800" r="0.8" fill="#001040"/><circle cx="1425.2" cy="801.5" r="7.3" fill="#000" opacity="0.45" filter="url(#sh)"/><circle cx="1424.2" cy="800" r="6.8" fill="url(#bc)" stroke="#202020" stroke-width="0.9"/><circle cx="1424.2" cy="800" r="0.8" fill="#001040"/><circle cx="1432.4" cy="801.5" r="7.3" fill="#000" opacity="0.45" filter="url(#sh)"/><circle cx="1431.4" cy="800" r="6.8" fill="url(#bc)" stroke="#202020" stroke-width="0.9"/><circle cx="1431.4" cy="800" r="0.8" fill="#001040"/><circle cx="1439.6" cy="801.5" r="7.3" fill="#000" opacity="0.45" filter="url(#sh)"/><circle cx="1438.6" cy="800" r="6.8" fill="url(#bc)" stroke="#202020" stroke-width="0.9"/><circle cx="1438.6" cy="800" r="0.8" fill="#001040"/><circle cx="1446.8" cy="801.5" r="7.3" fill="#000" opacity="0.45" filter="url(#sh)"/><circle cx="1445.8" cy="800" r="6.8" fill="url(#bc)" stroke="#202020" stroke-width="0.9"/><circle cx="1445.8" cy="800" r="0.8" fill="#001040"/><circle cx="1454" cy="801.5" r="7.3" fill="#000" opacity="0.45" filter="url(#sh)"/><circle cx="1453" cy="800" r="6.8" fill="url(#bc)" stroke="#202020" stroke-width="0.9"/><circle cx="1453" cy="800" r="0.8" fill="#001040"/><circle cx="1461.3" cy="801.5" r="7.3" fill="#000" opacity="0.45" filter="url(#sh)"/><circle cx="1460.3" cy="800" r="6.8" fill="url(#bc)" stroke="#202020" stroke-width="0.9"/><circle cx="1460.3" cy="800" r="0.8" fill="#001040"/><circle cx="1334" cy="945.8" r="6.7" fill="#000" opacity="0.45" filter="url(#sh)"/><circle cx="1333" cy="944.3" r="6.2" fill="url(#bb)" stroke="#202020" stroke-width="0.9"/><circle cx="1345.1" cy="933.7" r="6.7" fill="#000" opacity="0.45" filter="url(#sh)"/><circle cx="1344.1" cy="932.2" r="6.2" fill="url(#bb)" stroke="#202020" stroke-width="0.9"/><circle cx="1355.7" cy="920.8" r="6.7" fill="#000" opacity="0.45" filter="url(#sh)"/><circle cx="1354.7" cy="919.3" r="6.2" fill="url(#bb)" stroke="#202020" stroke-width="0.9"/><circle cx="1371" cy="905.0" r="6.7" fill="#000" opacity="0.45" filter="url(#sh)"/><circle cx="1370" cy="903.5" r="6.2" fill="url(#bb)" stroke="#202020" stroke-width="0.9"/><circle cx="1381.6" cy="891.5" r="6.7" fill="#000" opacity="0.45" filter="url(#sh)"/><circle cx="1380.6" cy="890" r="6.2" fill="url(#bb)" stroke="#202020" stroke-width="0.9"/><circle cx="1396" cy="877.7" r="6.7" fill="#000" opacity="0.45" filter="url(#sh)"/><circle cx="1395" cy="876.2" r="6.2" fill="url(#bb)" stroke="#202020" stroke-width="0.9"/><circle cx="1410.7" cy="859.9" r="6.7" fill="#000" opacity="0.45" filter="url(#sh)"/><circle cx="1409.7" cy="858.4" r="6.2" fill="url(#bb)" stroke="#202020" stroke-width="0.9"/><circle cx="1426.4" cy="843.7" r="6.7" fill="#000" opacity="0.45" filter="url(#sh)"/><circle cx="1425.4" cy="842.2" r="6.2" fill="url(#bb)" stroke="#202020" stroke-width="0.9"/><circle cx="1439.6" cy="828.1" r="6.7" fill="#000" opacity="0.45" filter="url(#sh)"/><circle cx="1438.6" cy="826.6" r="6.2" fill="url(#bb)" stroke="#202020" stroke-width="0.9"/><circle cx="1452.8" cy="814.8" r="6.7" fill="#000" opacity="0.45" filter="url(#sh)"/><circle cx="1451.8" cy="813.3" r="6.2" fill="url(#bb)" stroke="#202020" stroke-width="0.9"/><circle cx="1469.5" cy="810.0" r="6.7" fill="#000" opacity="0.45" filter="url(#sh)"/><circle cx="1468.5" cy="808.5" r="6.2" fill="url(#bm)" stroke="#202020" stroke-width="0.9"/><circle cx="1468.5" cy="808.5" r="0.8" fill="#001040"/><circle cx="1470" cy="819.5" r="6.7" fill="#000" opacity="0.45" filter="url(#sh)"/><circle cx="1469" cy="818" r="6.2" fill="url(#bm)" stroke="#202020" stroke-width="0.9"/><circle cx="1469" cy="818" r="0.8" fill="#001040"/><circle cx="1470.5" cy="828.1" r="6.7" fill="#000" opacity="0.45" filter="url(#sh)"/><circle cx="1469.5" cy="826.6" r="6.2" fill="url(#bm)" stroke="#202020" stroke-width="0.9"/><circle cx="1469.5" cy="826.6" r="0.8" fill="#001040"/><circle cx="1471" cy="838.9" r="6.7" fill="#000" opacity="0.45" filter="url(#sh)"/><circle cx="1470" cy="837.4" r="6.2" fill="url(#bm)" stroke="#202020" stroke-width="0.9"/><circle cx="1470" cy="837.4" r="0.8" fill="#001040"/><circle cx="1471.5" cy="848.5" r="6.7" fill="#000" opacity="0.45" filter="url(#sh)"/><circle cx="1470.5" cy="847" r="6.2" fill="url(#bm)" stroke="#202020" stroke-width="0.9"/><circle cx="1470.5" cy="847" r="0.8" fill="#001040"/><circle cx="1471.5" cy="858.1" r="6.7" fill="#000" opacity="0.45" filter="url(#sh)"/><circle cx="1470.5" cy="856.6" r="6.2" fill="url(#bm)" stroke="#202020" stroke-width="0.9"/><circle cx="1470.5" cy="856.6" r="0.8" fill="#001040"/><circle cx="1472" cy="867.8" r="6.7" fill="#000" opacity="0.45" filter="url(#sh)"/><circle cx="1471" cy="866.3" r="6.2" fill="url(#bm)" stroke="#202020" stroke-width="0.9"/><circle cx="1471" cy="866.3" r="0.8" fill="#001040"/><circle cx="1472" cy="877.4" r="6.7" fill="#000" opacity="0.45" filter="url(#sh)"/><circle cx="1471" cy="875.9" r="6.2" fill="url(#bm)" stroke="#202020" stroke-width="0.9"/><circle cx="1471" cy="875.9" r="0.8" fill="#001040"/><circle cx="1472.5" cy="887.0" r="6.7" fill="#000" opacity="0.45" filter="url(#sh)"/><circle cx="1471.5" cy="885.5" r="6.2" fill="url(#bm)" stroke="#202020" stroke-width="0.9"/><circle cx="1471.5" cy="885.5" r="0.8" fill="#001040"/><circle cx="1473" cy="895.5" r="6.7" fill="#000" opacity="0.45" filter="url(#sh)"/><circle cx="1472" cy="894" r="6.2" fill="url(#bm)" stroke="#202020" stroke-width="0.9"/><circle cx="1472" cy="894" r="0.8" fill="#001040"/><circle cx="1461" cy="635.7" r="6.3" fill="#000" opacity="0.45" filter="url(#sh)"/><circle cx="1460" cy="634.2" r="5.8" fill="url(#bg)" stroke="#202020" stroke-width="0.9"/><circle cx="1460" cy="634.2" r="0.8" fill="#001040"/><circle cx="1461.8" cy="652.3" r="6.3" fill="#000" opacity="0.45" filter="url(#sh)"/><circle cx="1460.8" cy="650.8" r="5.8" fill="url(#bg)" stroke="#202020" stroke-width="0.9"/><circle cx="1460.8" cy="650.8" r="0.8" fill="#001040"/><circle cx="1462.7" cy="669.8" r="6.3" fill="#000" opacity="0.45" filter="url(#sh)"/><circle cx="1461.7" cy="668.3" r="5.8" fill="url(#bg)" stroke="#202020" stroke-width="0.9"/><circle cx="1461.7" cy="668.3" r="0.8" fill="#001040"/><circle cx="1465.2" cy="684.8" r="6.3" fill="#000" opacity="0.45" filter="url(#sh)"/><circle cx="1464.2" cy="683.3" r="5.8" fill="url(#bg)" stroke="#202020" stroke-width="0.9"/><circle cx="1464.2" cy="683.3" r="0.8" fill="#001040"/><circle cx="1464.3" cy="703.2" r="6.3" fill="#000" opacity="0.45" filter="url(#sh)"/><circle cx="1463.3" cy="701.7" r="5.8" fill="url(#bg)" stroke="#202020" stroke-width="0.9"/><circle cx="1463.3" cy="701.7" r="0.8" fill="#001040"/><circle cx="1466.8" cy="718.2" r="6.3" fill="#000" opacity="0.45" filter="url(#sh)"/><circle cx="1465.8" cy="716.7" r="5.8" fill="url(#bg)" stroke="#202020" stroke-width="0.9"/><circle cx="1465.8" cy="716.7" r="0.8" fill="#001040"/><circle cx="1467.7" cy="734.8" r="6.3" fill="#000" opacity="0.45" filter="url(#sh)"/><circle cx="1466.7" cy="733.3" r="5.8" fill="url(#bg)" stroke="#202020" stroke-width="0.9"/><circle cx="1466.7" cy="733.3" r="0.8" fill="#001040"/><circle cx="1466.8" cy="751.5" r="6.3" fill="#000" opacity="0.45" filter="url(#sh)"/><circle cx="1465.8" cy="750" r="5.8" fill="url(#bg)" stroke="#202020" stroke-width="0.9"/><circle cx="1465.8" cy="750" r="0.8" fill="#001040"/><circle cx="1467.7" cy="766.5" r="6.3" fill="#000" opacity="0.45" filter="url(#sh)"/><circle cx="1466.7" cy="765" r="5.8" fill="url(#bg)" stroke="#202020" stroke-width="0.9"/><circle cx="1466.7" cy="765" r="0.8" fill="#001040"/><circle cx="1467.7" cy="783.2" r="6.3" fill="#000" opacity="0.45" filter="url(#sh)"/><circle cx="1466.7" cy="781.7" r="5.8" fill="url(#bg)" stroke="#202020" stroke-width="0.9"/><circle cx="1466.7" cy="781.7" r="0.8" fill="#001040"/><circle cx="1478.8" cy="790.4" r="6.5" fill="#000" opacity="0.45" filter="url(#sh)"/><circle cx="1477.8" cy="788.9" r="6" fill="url(#by)" stroke="#202020" stroke-width="0.9"/><circle cx="1477.8" cy="788.9" r="0.8" fill="#001040"/><circle cx="1488.4" cy="779.3" r="6.5" fill="#000" opacity="0.45" filter="url(#sh)"/><circle cx="1487.4" cy="777.8" r="6" fill="url(#by)" stroke="#202020" stroke-width="0.9"/><circle cx="1487.4" cy="777.8" r="0.8" fill="#001040"/><circle cx="1499.2" cy="768.2" r="6.5" fill="#000" opacity="0.45" filter="url(#sh)"/><circle cx="1498.2" cy="766.7" r="6" fill="url(#by)" stroke="#202020" stroke-width="0.9"/><circle cx="1498.2" cy="766.7" r="0.8" fill="#001040"/><circle cx="1508.4" cy="759.3" r="6.5" fill="#000" opacity="0.45" filter="url(#sh)"/><circle cx="1507.4" cy="757.8" r="6" fill="url(#by)" stroke="#202020" stroke-width="0.9"/><circle cx="1507.4" cy="757.8" r="0.8" fill="#001040"/><circle cx="1518" cy="747.4" r="6.5" fill="#000" opacity="0.45" filter="url(#sh)"/><circle cx="1517" cy="745.9" r="6" fill="url(#by)" stroke="#202020" stroke-width="0.9"/><circle cx="1517" cy="745.9" r="0.8" fill="#001040"/><circle cx="1528.4" cy="736.3" r="6.5" fill="#000" opacity="0.45" filter="url(#sh)"/><circle cx="1527.4" cy="734.8" r="6" fill="url(#by)" stroke="#202020" stroke-width="0.9"/><circle cx="1527.4" cy="734.8" r="0.8" fill="#001040"/><circle cx="1537.3" cy="725.9" r="6.5" fill="#000" opacity="0.45" filter="url(#sh)"/><circle cx="1536.3" cy="724.4" r="6" fill="url(#by)" stroke="#202020" stroke-width="0.9"/><circle cx="1536.3" cy="724.4" r="0.8" fill="#001040"/><circle cx="1546.9" cy="715.6" r="6.5" fill="#000" opacity="0.45" filter="url(#sh)"/><circle cx="1545.9" cy="714.1" r="6" fill="url(#by)" stroke="#202020" stroke-width="0.9"/><circle cx="1545.9" cy="714.1" r="0.8" fill="#001040"/><circle cx="1555.8" cy="705.9" r="6.5" fill="#000" opacity="0.45" filter="url(#sh)"/><circle cx="1554.8" cy="704.4" r="6" fill="url(#by)" stroke="#202020" stroke-width="0.9"/><circle cx="1554.8" cy="704.4" r="0.8" fill="#001040"/><circle cx="1565.4" cy="695.6" r="6.5" fill="#000" opacity="0.45" filter="url(#sh)"/><circle cx="1564.4" cy="694.1" r="6" fill="url(#by)" stroke="#202020" stroke-width="0.9"/><circle cx="1564.4" cy="694.1" r="0.8" fill="#001040"/><circle cx="1498.8" cy="797.1" r="7.0" fill="#000" opacity="0.45" filter="url(#sh)"/><circle cx="1497.8" cy="795.6" r="6.5" fill="url(#br)" stroke="#202020" stroke-width="0.9"/><circle cx="1527.7" cy="797.1" r="7.0" fill="#000" opacity="0.45" filter="url(#sh)"/><circle cx="1526.7" cy="795.6" r="6.5" fill="url(#br)" stroke="#202020" stroke-width="0.9"/><circle cx="1556.5" cy="796.5" r="7.0" fill="#000" opacity="0.45" filter="url(#sh)"/><circle cx="1555.5" cy="795" r="6.5" fill="url(#br)" stroke="#202020" stroke-width="0.9"/><circle cx="1584" cy="796.5" r="7.0" fill="#000" opacity="0.45" filter="url(#sh)"/><circle cx="1583" cy="795" r="6.5" fill="url(#br)" stroke="#202020" stroke-width="0.9"/><circle cx="1613.5" cy="796.3" r="7.0" fill="#000" opacity="0.45" filter="url(#sh)"/><circle cx="1612.5" cy="794.8" r="6.5" fill="url(#br)" stroke="#202020" stroke-width="0.9"/><circle cx="1642.5" cy="796.3" r="7.0" fill="#000" opacity="0.45" filter="url(#sh)"/><circle cx="1641.5" cy="794.8" r="6.5" fill="url(#br)" stroke="#202020" stroke-width="0.9"/><circle cx="1669.4" cy="796.0" r="7.0" fill="#000" opacity="0.45" filter="url(#sh)"/><circle cx="1668.4" cy="794.5" r="6.5" fill="url(#br)" stroke="#202020" stroke-width="0.9"/><circle cx="1696.2" cy="796.0" r="7.0" fill="#000" opacity="0.45" filter="url(#sh)"/><circle cx="1695.2" cy="794.5" r="6.5" fill="url(#br)" stroke="#202020" stroke-width="0.9"/><circle cx="1720.4" cy="796.0" r="7.0" fill="#000" opacity="0.45" filter="url(#sh)"/><circle cx="1719.4" cy="794.5" r="6.5" fill="url(#br)" stroke="#202020" stroke-width="0.9"/><circle cx="1746.5" cy="796.0" r="7.0" fill="#000" opacity="0.45" filter="url(#sh)"/><circle cx="1745.5" cy="794.5" r="6.5" fill="url(#br)" stroke="#202020" stroke-width="0.9"/><circle cx="1378.5" cy="836.1" r="6.0" fill="#000" opacity="0.45" filter="url(#sh)"/><circle cx="1377.5" cy="834.6" r="5.5" fill="url(#bw)" stroke="#202020" stroke-width="0.9"/><circle cx="1410.2" cy="838.1" r="6.0" fill="#000" opacity="0.45" filter="url(#sh)"/><circle cx="1409.2" cy="836.6" r="5.5" fill="url(#bw)" stroke="#202020" stroke-width="0.9"/><circle cx="1426" cy="846.0" r="6.0" fill="#000" opacity="0.45" filter="url(#sh)"/><circle cx="1425" cy="844.5" r="5.5" fill="url(#bw)" stroke="#202020" stroke-width="0.9"/><circle cx="1441.9" cy="863.8" r="6.0" fill="#000" opacity="0.45" filter="url(#sh)"/><circle cx="1440.9" cy="862.3" r="5.5" fill="url(#bw)" stroke="#202020" stroke-width="0.9"/><circle cx="1382.5" cy="881.5" r="6.0" fill="#000" opacity="0.45" filter="url(#sh)"/><circle cx="1381.5" cy="880" r="5.5" fill="url(#bw)" stroke="#202020" stroke-width="0.9"/><circle cx="1361.7" cy="908.7" r="6.0" fill="#000" opacity="0.45" filter="url(#sh)"/><circle cx="1360.7" cy="907.2" r="5.5" fill="url(#bw)" stroke="#202020" stroke-width="0.9"/><circle cx="1424" cy="778.7" r="6.0" fill="#000" opacity="0.45" filter="url(#sh)"/><circle cx="1423" cy="777.2" r="5.5" fill="url(#bw)" stroke="#202020" stroke-width="0.9"/><circle cx="1521" cy="846.0" r="6.0" fill="#000" opacity="0.45" filter="url(#sh)"/><circle cx="1520" cy="844.5" r="5.5" fill="url(#bw)" stroke="#202020" stroke-width="0.9"/><circle cx="1602.2" cy="808.4" r="6.0" fill="#000" opacity="0.45" filter="url(#sh)"/><circle cx="1601.2" cy="806.9" r="5.5" fill="url(#bw)" stroke="#202020" stroke-width="0.9"/><circle cx="1675.4" cy="800.5" r="6.0" fill="#000" opacity="0.45" filter="url(#sh)"/><circle cx="1674.4" cy="799" r="5.5" fill="url(#bw)" stroke="#202020" stroke-width="0.9"/><circle cx="1651.7" cy="753.0" r="6.0" fill="#000" opacity="0.45" filter="url(#sh)"/><circle cx="1650.7" cy="751.5" r="5.5" fill="url(#bw)" stroke="#202020" stroke-width="0.9"/><circle cx="1616" cy="733.2" r="6.0" fill="#000" opacity="0.45" filter="url(#sh)"/><circle cx="1615" cy="731.7" r="5.5" fill="url(#bw)" stroke="#202020" stroke-width="0.9"/><circle cx="1590.3" cy="712.5" r="6.0" fill="#000" opacity="0.45" filter="url(#sh)"/><circle cx="1589.3" cy="711" r="5.5" fill="url(#bw)" stroke="#202020" stroke-width="0.9"/><circle cx="1531" cy="782.5" r="6.0" fill="#000" opacity="0.45" filter="url(#sh)"/><circle cx="1530" cy="781" r="5.5" fill="url(#bw)" stroke="#202020" stroke-width="0.9"/><circle cx="1552.7" cy="775.9" r="6.0" fill="#000" opacity="0.45" filter="url(#sh)"/><circle cx="1551.7" cy="774.4" r="5.5" fill="url(#bw)" stroke="#202020" stroke-width="0.9"/><circle cx="1497.3" cy="735.1" r="6.0" fill="#000" opacity="0.45" filter="url(#sh)"/><circle cx="1496.3" cy="733.6" r="5.5" fill="url(#bw)" stroke="#202020" stroke-width="0.9"/><circle cx="1528.4" cy="697.1" r="6.0" fill="#000" opacity="0.45" filter="url(#sh)"/><circle cx="1527.4" cy="695.6" r="5.5" fill="url(#bw)" stroke="#202020" stroke-width="0.9"/><circle cx="1463.5" cy="698.2" r="5.5" fill="#000" opacity="0.45" filter="url(#sh)"/><circle cx="1462.5" cy="696.7" r="5" fill="url(#bw)" stroke="#202020" stroke-width="0.9"/><circle cx="1485.4" cy="790.4" r="5.5" fill="#000" opacity="0.45" filter="url(#sh)"/><circle cx="1484.4" cy="788.9" r="5" fill="url(#bw)" stroke="#202020" stroke-width="0.9"/><circle cx="1459" cy="778.2" r="5.5" fill="#000" opacity="0.45" filter="url(#sh)"/><circle cx="1458" cy="776.7" r="5" fill="url(#bw)" stroke="#202020" stroke-width="0.9"/><circle cx="1468.5" cy="797" r="7" fill="#fff" stroke="#000" stroke-width="2.2"/><path d="M1747 791h6M1750 788v6" stroke="#fff" stroke-width="1.2"/></svg><div class="a" style="left:0px;top:1038px;width:1920px;height:23px;background:#f0f0f0"></div><div class="a" style="left:0px;top:1042px;width:1920px;height:1px;background:#000"></div><div class="a" style="left:0px;top:1060px;width:400px;height:1px;background:#000"></div><div class="a" style="left:0px;top:1043px;width:54px;height:17px;background:#f0f0f0;border-right:2px solid #000"></div><div class="a" style="left:1px;top:1044px;width:17px;height:15px;background:#f0f0f0;border-top:1px solid #fff;border-left:1px solid #fff;border-right:1px solid #808080;border-bottom:1px solid #808080"></div><div class="a" style="left:18px;top:1044px;width:17px;height:15px;background:#f0f0f0;border-top:1px solid #fff;border-left:1px solid #fff;border-right:1px solid #808080;border-bottom:1px solid #808080"></div><div class="a" style="left:35px;top:1044px;width:17px;height:15px;background:#f0f0f0;border-top:1px solid #fff;border-left:1px solid #fff;border-right:1px solid #808080;border-bottom:1px solid #808080"></div><svg class="a" style="left:0;top:1043px" width="54" height="17"><path d="M5 4l8 8M13 4l-8 8" stroke="#000" stroke-width="1.3"/><path d="M28.5 5l-4 3.5 4 3.5z" fill="#000"/><path d="M41.5 5l4 3.5-4 3.5z" fill="#000"/></svg><svg class="a" style="left:54px;top:1042px" width="340" height="19" viewBox="54 1042 340 19"><path d="M54 1042.5 L62 1060 L120 1060 L127 1042.5Z" fill="#fff"/><path d="M54.5 1042.5 L62.5 1060.5 L120 1060.5 L127 1042.5" fill="none" stroke="#000" stroke-width="1"/><path d="M127 1042.5 L120 1060.5 L204 1060.5 L197 1043" fill="none" stroke="#000" stroke-width="1"/><path d="M197 1042.5 L205 1060.5 L300 1060.5 L307 1043" fill="none" stroke="#000" stroke-width="1"/><path d="M302 1042.5 L309 1060.5 L375 1060.5 L383 1043" fill="none" stroke="#000" stroke-width="1"/></svg><div class="t" style="left:67px;top:1046px;font-size:11px;font-weight:bold;letter-spacing:-0.1px">Measures</div><div class="t" style="left:135px;top:1047px;font-size:10px;letter-spacing:-0.25px">CIE Diagram</div><div class="t" style="left:216px;top:1047px;font-size:10px;letter-spacing:-0.25px">Color temperature</div><div class="t" style="left:318px;top:1047px;font-size:10px;letter-spacing:-0.25px">RGB Levels</div><div class="a" style="left:0px;top:1061px;width:1920px;height:19px;background:linear-gradient(90deg,#e3eaf4,#e9eff7 50%,#eef3f9)"></div><div class="t" style="left:3px;top:1066px;font-size:12px;letter-spacing:-0.6px">Ready</div><div class="a" style="left:1743px;top:1062px;width:73px;height:18px;border:1px solid #b9cde6;border-bottom:none"></div><div class="a" style="left:1821px;top:1062px;width:27px;height:18px;border:1px solid #b9cde6;border-bottom:none"></div><div class="a" style="left:1851px;top:1062px;width:33px;height:18px;border:1px solid #b9cde6;border-bottom:none"></div><div class="a" style="left:1886px;top:1062px;width:34px;height:18px;border:1px solid #b9cde6;border-bottom:none"></div><div class="t" style="left:1853px;top:1065px;font-size:12px;letter-spacing:0.2px">NUM</div><svg class="a" style="left:1750px;top:1044px" width="15" height="15"><path d="M1 1h13v9l-3 4h-2l-2-3-2 3h-2l-2-4z" fill="#8a7a10" stroke="#333" stroke-width="0.8"/><rect x="3" y="3" width="7" height="4" fill="#e02020"/><path d="M9 9h5l-2.5 4z" fill="#f0e020"/></svg><div class="a" style="left:1845px;top:1044px;width:13px;height:13px;border:1px solid #555;background:#fff"></div><div class="t" style="left:1864px;top:1045px;font-size:12px;letter-spacing:-0.6px">Reference</div></body></html>
